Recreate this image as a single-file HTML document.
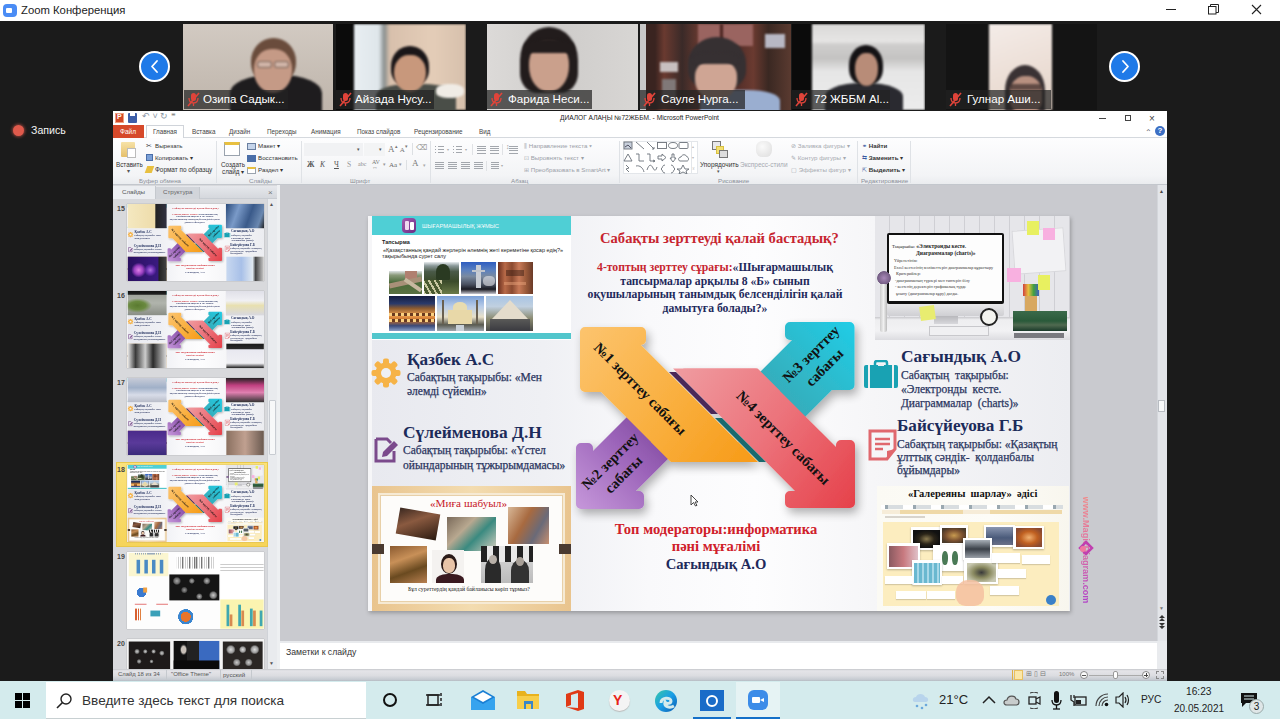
<!DOCTYPE html>
<html><head><meta charset="utf-8">
<style>
*{margin:0;padding:0;box-sizing:border-box}
html,body{width:1280px;height:719px;overflow:hidden;background:#1b1b1b;font-family:"Liberation Sans",sans-serif}
.a{position:absolute}
.t{position:absolute;white-space:nowrap}
/* title bar */
#tb{left:0;top:0;width:1280px;height:21px;background:#fff}
/* thumbs */
.th{position:absolute;top:24px;height:86px;background:#0d0d0d;overflow:hidden}
.lbl{position:absolute;height:19px;background:rgba(34,34,34,.72)}
.mic{position:absolute;left:4px;top:3px;width:13px;height:13px}
.circ{position:absolute;width:31px;height:31px;border-radius:50%;background:#1f7ae8;border:2.5px solid #fff}
.th>div{filter:blur(1.2px)}
/* ppt */
#ppt{left:113px;top:111px;width:1054px;height:570px;background:#c9cacf;overflow:hidden}
/* taskbar */
#task{left:0;top:681px;width:1280px;height:38px;background:#d4ebed}
</style></head><body>

<!-- Title bar -->
<div id="tb" class="a">
  <div class="a" style="left:3px;top:4px;width:14px;height:13px;border-radius:4px;background:#4a8cf5"></div>
  <div class="a" style="left:6px;top:8px;width:6px;height:5px;border-radius:1px;background:#fff"></div>
  <div class="t" style="left:21px;top:4px;font-size:11.3px;color:#222">Zoom Конференция</div>
  <div class="a" style="left:1166px;top:9px;width:10px;height:1px;background:#222"></div>
  <svg class="a" style="left:1208px;top:4px" width="11" height="11" viewBox="0 0 11 11"><rect x="0.5" y="2.5" width="7.5" height="7.5" fill="#fff" stroke="#222" stroke-width="1"/><path d="M2.5 2.5 V0.5 H10.5 V8.5 H8" fill="none" stroke="#222" stroke-width="1"/></svg>
  <svg class="a" style="left:1251px;top:4px" width="11" height="11" viewBox="0 0 11 11"><path d="M1 1 L10 10 M10 1 L1 10" stroke="#222" stroke-width="1.1"/></svg>
</div>

<!-- thumbnails -->
<div class="th" style="left:183px;width:150px;background:linear-gradient(#d2cac2,#c6bdb4 60%,#bfb5ab)">
 <div class="a" style="left:47px;top:51px;width:92px;height:40px;border-radius:45% 45% 0 0;background:#1e1c1e"></div>
 <div class="a" style="left:68px;top:14px;width:45px;height:46px;border-radius:50% 50% 45% 45%;background:#6a4c3c"></div>
 <div class="a" style="left:71px;top:25px;width:38px;height:44px;border-radius:45% 45% 50% 50%;background:#c59a86"></div>
 <div class="a" style="left:74px;top:37px;width:15px;height:7px;border-radius:3px;border:1px solid rgba(90,70,60,.7);background:rgba(230,230,230,.35)"></div><div class="a" style="left:91px;top:37px;width:15px;height:7px;border-radius:3px;border:1px solid rgba(90,70,60,.7);background:rgba(230,230,230,.35)"></div>
</div>
<div class="th" style="left:336px;width:130px;background:#0b0b0b">
 <div class="a" style="left:18px;top:0;width:112px;height:86px;background:linear-gradient(90deg,#e8eef2 0%,#dfe6ea 22%,#8a9090 27%,#d8c0ac 32%,#e4cdb8 70%,#d6c0ac 100%)"></div>
 <div class="a" style="left:40px;top:60px;width:80px;height:30px;border-radius:40% 40% 0 0;background:#4a4e48"></div>
 <div class="a" style="left:55px;top:22px;width:38px;height:40px;border-radius:50% 50% 40% 40%;background:#1a1618"></div>
 <div class="a" style="left:58px;top:31px;width:32px;height:37px;border-radius:45% 45% 50% 50%;background:#c8987c"></div>
 <div class="a" style="left:100px;top:60px;width:28px;height:14px;border-radius:40%;background:#f0ece6"></div>
</div>
<div class="th" style="left:487px;width:151px;background:linear-gradient(90deg,#dcdad8,#cfcdcb 50%,#d8d6d4)">
 <div class="a" style="left:33px;top:3px;width:58px;height:66px;border-radius:50% 50% 30% 30%;background:#221c1c"></div>
 <div class="a" style="left:42px;top:17px;width:40px;height:51px;border-radius:45% 45% 50% 50%;background:#caa08c"></div>
 <div class="a" style="left:37px;top:15px;width:50px;height:14px;border-radius:50% 50% 10% 10%;background:#221c1c"></div>
 <div class="a" style="left:45px;top:72px;width:50px;height:16px;background:#d8d2cf"></div>
</div>
<div class="th" style="left:640px;width:151px;background:linear-gradient(90deg,#c8c8c8 0 6px,#3a2420 6px 10%,#6a3a30 16%,#3a2a28 28%,#6a3a30 40%,#5a3430 48%,#4a2a26 60%,#6a3a30 75%,#3a2822 85%,#5a3a30 100%)">
 <div class="a" style="left:58px;top:0;width:55px;height:22px;background:#9a6460"></div>
 <div class="a" style="left:80px;top:0;width:3px;height:24px;background:#4a2420"></div>
 <div class="a" style="left:125px;top:10px;width:20px;height:14px;background:#b8b8c4"></div>
 <div class="a" style="left:20px;top:38px;width:18px;height:10px;background:#c8c0c0"></div>
 <div class="a" style="left:22px;top:55px;width:14px;height:20px;background:#807878"></div>
 <div class="a" style="left:60px;top:66px;width:80px;height:26px;border-radius:40% 40% 0 0;background:#9aaed0"></div>
 <div class="a" style="left:48px;top:13px;width:58px;height:52px;border-radius:50% 50% 35% 35%;background:#363032"></div>
 <div class="a" style="left:55px;top:36px;width:42px;height:40px;border-radius:40% 40% 50% 50%;background:#cfa594"></div>
 <div class="a" style="left:52px;top:28px;width:48px;height:12px;border-radius:50% 50% 20% 20%;background:#363032"></div>
</div>
<div class="th" style="left:792px;width:133px;background:#0b0b0b">
 <div class="a" style="left:20px;top:0;width:113px;height:86px;background:linear-gradient(#dad9d8 0%,#e6e5e4 20%,#cfcecd 24%,#c4c3c2 40%,#e6e6e6 55%,#ececec 100%)"></div>
 <div class="a" style="left:33px;top:59px;width:78px;height:30px;border-radius:45% 45% 0 0;background:#2a2a30"></div>
 <div class="a" style="left:57px;top:21px;width:34px;height:40px;border-radius:50% 50% 40% 40%;background:#141214"></div>
 <div class="a" style="left:63px;top:29px;width:23px;height:33px;border-radius:45% 45% 50% 50%;background:#b88c78"></div>
</div>
<div class="th" style="left:946px;width:151px;background:#141414">
 <div class="a" style="left:43px;top:0;width:63px;height:86px;background:linear-gradient(160deg,#f4ece8 0%,#ede0d8 50%,#e4d4c8 100%)"></div>
 <div class="a" style="left:59px;top:41px;width:40px;height:50px;border-radius:50% 50% 0 0;background:#3a3234"></div>
 <div class="a" style="left:64px;top:52px;width:32px;height:36px;border-radius:45% 45% 30% 30%;background:#b89080"></div>
 <div class="a" style="left:64px;top:60px;width:32px;height:6px;background:rgba(40,30,30,.6)"></div>
</div>
<!-- labels -->
<div class="lbl" style="left:184px;top:90px;width:104px"></div>
<div class="lbl" style="left:336px;top:90px;width:98px"></div>
<div class="lbl" style="left:487px;top:90px;width:105px"></div>
<div class="lbl" style="left:640px;top:90px;width:105px"></div>
<div class="lbl" style="left:792px;top:90px;width:98px"></div>
<div class="lbl" style="left:946px;top:90px;width:105px"></div>
<div class="t" style="left:203px;top:92px;font-size:11.6px;color:#fff">Озипа Садык...</div>
<div class="t" style="left:355px;top:92px;font-size:11.6px;color:#fff">Айзада Нусу...</div>
<div class="t" style="left:508px;top:92px;font-size:11.6px;color:#fff">Фарида Неси...</div>
<div class="t" style="left:661px;top:92px;font-size:11.6px;color:#fff">Сауле Нурга...</div>
<div class="t" style="left:814px;top:92px;font-size:11.6px;color:#fff">72 ЖББМ Al...</div>
<div class="t" style="left:967px;top:92px;font-size:11.6px;color:#fff">Гулнар Аши...</div>
<svg class="a" style="left:187px;top:92px" width="13" height="15" viewBox="0 0 13 15"><rect x="4" y="1" width="5" height="8" rx="2.5" fill="#e0443a"/><path d="M2 6 Q2 11 6.5 11 Q11 11 11 6 M6.5 11 V14" fill="none" stroke="#e0443a" stroke-width="1.3"/><line x1="1" y1="14" x2="12" y2="1" stroke="#e0443a" stroke-width="1.6"/></svg>
<svg class="a" style="left:339px;top:92px" width="13" height="15" viewBox="0 0 13 15"><rect x="4" y="1" width="5" height="8" rx="2.5" fill="#e0443a"/><path d="M2 6 Q2 11 6.5 11 Q11 11 11 6 M6.5 11 V14" fill="none" stroke="#e0443a" stroke-width="1.3"/><line x1="1" y1="14" x2="12" y2="1" stroke="#e0443a" stroke-width="1.6"/></svg>
<svg class="a" style="left:490px;top:92px" width="13" height="15" viewBox="0 0 13 15"><rect x="4" y="1" width="5" height="8" rx="2.5" fill="#e0443a"/><path d="M2 6 Q2 11 6.5 11 Q11 11 11 6 M6.5 11 V14" fill="none" stroke="#e0443a" stroke-width="1.3"/><line x1="1" y1="14" x2="12" y2="1" stroke="#e0443a" stroke-width="1.6"/></svg>
<svg class="a" style="left:643px;top:92px" width="13" height="15" viewBox="0 0 13 15"><rect x="4" y="1" width="5" height="8" rx="2.5" fill="#e0443a"/><path d="M2 6 Q2 11 6.5 11 Q11 11 11 6 M6.5 11 V14" fill="none" stroke="#e0443a" stroke-width="1.3"/><line x1="1" y1="14" x2="12" y2="1" stroke="#e0443a" stroke-width="1.6"/></svg>
<svg class="a" style="left:795px;top:92px" width="13" height="15" viewBox="0 0 13 15"><rect x="4" y="1" width="5" height="8" rx="2.5" fill="#e0443a"/><path d="M2 6 Q2 11 6.5 11 Q11 11 11 6 M6.5 11 V14" fill="none" stroke="#e0443a" stroke-width="1.3"/><line x1="1" y1="14" x2="12" y2="1" stroke="#e0443a" stroke-width="1.6"/></svg>
<svg class="a" style="left:949px;top:92px" width="13" height="15" viewBox="0 0 13 15"><rect x="4" y="1" width="5" height="8" rx="2.5" fill="#e0443a"/><path d="M2 6 Q2 11 6.5 11 Q11 11 11 6 M6.5 11 V14" fill="none" stroke="#e0443a" stroke-width="1.3"/><line x1="1" y1="14" x2="12" y2="1" stroke="#e0443a" stroke-width="1.6"/></svg>
<div class="circ" style="left:139px;top:51px"></div>
<div class="circ" style="left:1109px;top:51px"></div>
<svg class="a" style="left:148px;top:59px" width="14" height="15" viewBox="0 0 14 15"><path d="M9 2 L4 7.5 L9 13" fill="none" stroke="#fff" stroke-width="1.8" stroke-linecap="round" stroke-linejoin="round"/></svg>
<svg class="a" style="left:1118px;top:59px" width="14" height="15" viewBox="0 0 14 15"><path d="M5 2 L10 7.5 L5 13" fill="none" stroke="#fff" stroke-width="1.8" stroke-linecap="round" stroke-linejoin="round"/></svg>

<!-- Запись -->
<div class="a" style="left:13px;top:125px;width:11px;height:11px;border-radius:50%;background:#e05a4c;box-shadow:0 0 3px 1px rgba(224,90,76,.6)"></div>
<div class="t" style="left:31px;top:124px;font-size:10.6px;color:#f4f4f4">Запись</div>

<!-- PowerPoint -->

<div id="ppt" class="a">
</div>
<!-- QAT / title -->
<div class="a" style="left:113px;top:111px;width:1054px;height:14px;background:#fff"></div>
<div class="a" style="left:115px;top:113px;width:9px;height:10px;background:#d24726;border:1px solid #f0a080"></div>
<div class="t" style="left:117px;top:113px;font-size:7px;color:#fff;font-weight:bold">P</div>
<div class="a" style="left:128px;top:113px;width:9px;height:10px;background:#3d5ea8;border-radius:1px"></div>
<div class="a" style="left:130px;top:113px;width:5px;height:3px;background:#fff"></div>
<div class="t" style="left:142px;top:111px;font-size:9px;color:#8a95a5">↶ ˅ ↻ <span style="color:#333">⁼</span></div>
<div class="t" style="left:560px;top:114px;font-size:6.6px;color:#1a1a1a">ДИАЛОГ АЛАҢЫ №72ЖББМ. - Microsoft PowerPoint</div>
<div class="a" style="left:1099px;top:118px;width:7px;height:1px;background:#444"></div>
<div class="a" style="left:1125px;top:115px;width:6px;height:6px;border:1px solid #444"></div>
<div class="t" style="left:1149px;top:113px;font-size:10px;color:#444">×</div>
<!-- tabs row -->
<div class="a" style="left:113px;top:125px;width:1054px;height:13px;background:#fff"></div>
<div class="a" style="left:113px;top:137px;width:1054px;height:1px;background:#d5d9de"></div>
<div class="a" style="left:113px;top:125px;width:31px;height:13px;background:#d6492a"></div>
<div class="t" style="left:120px;top:128px;font-size:6.5px;color:#fff">Файл</div>
<div class="a" style="left:146px;top:125px;width:38px;height:14px;background:#fff;border:1px solid #d0d4da;border-bottom:none"></div>
<div class="t" style="left:153px;top:128px;font-size:6.3px;color:#444">Главная</div>
<div class="t" style="left:192px;top:128px;font-size:6.3px;color:#444">Вставка</div>
<div class="t" style="left:229px;top:128px;font-size:6.3px;color:#444">Дизайн</div>
<div class="t" style="left:267px;top:128px;font-size:6.3px;color:#444">Переходы</div>
<div class="t" style="left:311px;top:128px;font-size:6.3px;color:#444">Анимация</div>
<div class="t" style="left:357px;top:128px;font-size:6.3px;color:#444">Показ слайдов</div>
<div class="t" style="left:414px;top:128px;font-size:6.3px;color:#444">Рецензирование</div>
<div class="t" style="left:479px;top:128px;font-size:6.3px;color:#444">Вид</div>
<div class="t" style="left:1145px;top:128px;font-size:8px;color:#666">⌃</div>
<div class="a" style="left:1155px;top:126px;width:10px;height:10px;border-radius:50%;background:#3c6fc4;color:#fff;font-size:8px;line-height:10px;text-align:center;font-weight:bold">?</div>
<!-- ribbon -->
<div class="a" style="left:113px;top:138px;width:1054px;height:47px;background:linear-gradient(#fdfdfe,#f3f4f6 80%,#e9ebee)"></div>
<div class="a" style="left:113px;top:184px;width:1054px;height:1px;background:#c3c7cd"></div>
<div class="a" style="left:216px;top:141px;width:1px;height:42px;background:#dfe2e6"></div>
<div class="a" style="left:301px;top:141px;width:1px;height:42px;background:#dfe2e6"></div>
<div class="a" style="left:430px;top:141px;width:1px;height:42px;background:#dfe2e6"></div>
<div class="a" style="left:619px;top:141px;width:1px;height:42px;background:#dfe2e6"></div>
<div class="a" style="left:857px;top:141px;width:1px;height:42px;background:#dfe2e6"></div>
<div class="a" style="left:910px;top:141px;width:1px;height:42px;background:#dfe2e6"></div>
<div class="t" style="left:139px;top:177px;font-size:6.2px;color:#8a8f98">Буфер обмена</div>
<div class="t" style="left:249px;top:177px;font-size:6.2px;color:#8a8f98">Слайды</div>
<div class="t" style="left:350px;top:177px;font-size:6.2px;color:#8a8f98">Шрифт</div>
<div class="t" style="left:511px;top:177px;font-size:6.2px;color:#8a8f98">Абзац</div>
<div class="t" style="left:718px;top:177px;font-size:6.2px;color:#8a8f98">Рисование</div>
<div class="t" style="left:861px;top:177px;font-size:6.2px;color:#8a8f98">Редактирование</div>
<!-- clipboard -->
<div class="a" style="left:121px;top:142px;width:14px;height:15px;background:linear-gradient(#f6e2a8,#e6c06a);border-radius:1px"></div>
<div class="a" style="left:127px;top:148px;width:9px;height:10px;background:#fff;border:1px solid #bbb"></div>
<div class="t" style="left:116px;top:161px;font-size:6.3px;color:#333">Вставить</div>
<div class="t" style="left:127px;top:167px;font-size:6px;color:#555">▾</div>
<div class="t" style="left:146px;top:142px;font-size:7px;color:#444">✂</div>
<div class="t" style="left:155px;top:142px;font-size:6.2px;color:#333">Вырезать</div>
<div class="a" style="left:146px;top:154px;width:7px;height:7px;background:#7aa0d8;border:1px solid #4a6ea8"></div>
<div class="t" style="left:155px;top:154px;font-size:6.2px;color:#333">Копировать ▾</div>
<div class="a" style="left:146px;top:166px;width:7px;height:7px;background:#e8c040;transform:skew(-20deg)"></div>
<div class="t" style="left:155px;top:166px;font-size:6.4px;color:#333">Формат по образцу</div>
<!-- slides -->
<div class="a" style="left:224px;top:142px;width:16px;height:14px;background:#fff;border:1px solid #9aa3ae;border-top:3px solid #e8c040"></div>
<div class="t" style="left:221px;top:161px;font-size:6.3px;color:#333">Создать</div>
<div class="t" style="left:222px;top:168px;font-size:6.3px;color:#333">слайд ▾</div>
<div class="a" style="left:247px;top:143px;width:9px;height:7px;background:#c5d4ea;border:1px solid #6a7fa0"></div>
<div class="t" style="left:258px;top:142px;font-size:6.2px;color:#333">Макет ▾</div>
<div class="a" style="left:247px;top:155px;width:9px;height:7px;background:#4a6ea8"></div>
<div class="t" style="left:258px;top:154px;font-size:6.2px;color:#333">Восстановить</div>
<div class="a" style="left:247px;top:167px;width:9px;height:7px;background:#fff;border:1px solid #9aa3ae;border-top:2px solid #e8c040"></div>
<div class="t" style="left:258px;top:166px;font-size:6.2px;color:#333">Раздел ▾</div>
<!-- font -->
<div class="a" style="left:304px;top:143px;width:59px;height:13px;background:#f1f2f4"></div>
<div class="t" style="left:357px;top:146px;font-size:5px;color:#555">▾</div>
<div class="a" style="left:364px;top:143px;width:21px;height:13px;background:#f3f4f5"></div>
<div class="t" style="left:379px;top:146px;font-size:5px;color:#555">▾</div>
<div class="t" style="left:388px;top:143px;font-size:9px;color:#777;font-family:'Liberation Serif',serif">A<span style="font-size:5px;vertical-align:4px">▴</span> <span style="font-size:7px">A</span><span style="font-size:5px;vertical-align:4px">▾</span></div>
<div class="a" style="left:412px;top:143px;width:1px;height:12px;background:#dde0e3"></div>
<div class="t" style="left:416px;top:143px;font-size:8px;color:#999">⌫</div>
<div class="t" style="left:307px;top:160px;font-size:7.5px;color:#555;font-family:'Liberation Serif',serif;font-weight:bold">Ж</div>
<div class="t" style="left:320px;top:160px;font-size:7.5px;color:#555;font-family:'Liberation Serif',serif;font-style:italic">К</div>
<div class="t" style="left:334px;top:160px;font-size:7.5px;color:#555;font-family:'Liberation Serif',serif;text-decoration:underline">Ч</div>
<div class="t" style="left:347px;top:160px;font-size:7.5px;color:#999;font-family:'Liberation Serif',serif">S</div>
<div class="t" style="left:358px;top:161px;font-size:6px;color:#888;font-family:'Liberation Serif',serif">abc</div>
<div class="t" style="left:372px;top:160px;font-size:6px;color:#777;font-family:'Liberation Serif',serif;line-height:5px">AV<br>↔</div>
<div class="t" style="left:383px;top:161px;font-size:5px;color:#999">▾</div>
<div class="t" style="left:389px;top:161px;font-size:7px;color:#666;font-family:'Liberation Serif',serif">Aa</div>
<div class="t" style="left:399px;top:161px;font-size:5px;color:#999">▾</div>
<div class="a" style="left:406px;top:160px;width:1px;height:10px;background:#dde0e3"></div>
<div class="t" style="left:412px;top:158px;font-size:9px;color:#777;font-family:'Liberation Serif',serif">A</div>
<div class="t" style="left:423px;top:162px;font-size:5px;color:#aaa">▾</div>
<!-- paragraph -->
<div class="a" style="left:435px;top:146.0px;width:1.2px;height:1.2px;background:#a3a7ad"></div><div class="a" style="left:438px;top:146.0px;width:6px;height:1px;background:#a3a7ad"></div><div class="a" style="left:435px;top:149.0px;width:1.2px;height:1.2px;background:#a3a7ad"></div><div class="a" style="left:438px;top:149.0px;width:6px;height:1px;background:#a3a7ad"></div><div class="a" style="left:435px;top:152.0px;width:1.2px;height:1.2px;background:#a3a7ad"></div><div class="a" style="left:438px;top:152.0px;width:6px;height:1px;background:#a3a7ad"></div><div class="t" style="left:447px;top:147px;font-size:4px;color:#aaa">▾</div><div class="a" style="left:453px;top:146.0px;width:1.2px;height:1.2px;background:#a3a7ad"></div><div class="a" style="left:456px;top:146.0px;width:6px;height:1px;background:#a3a7ad"></div><div class="a" style="left:453px;top:149.0px;width:1.2px;height:1.2px;background:#a3a7ad"></div><div class="a" style="left:456px;top:149.0px;width:6px;height:1px;background:#a3a7ad"></div><div class="a" style="left:453px;top:152.0px;width:1.2px;height:1.2px;background:#a3a7ad"></div><div class="a" style="left:456px;top:152.0px;width:6px;height:1px;background:#a3a7ad"></div><div class="t" style="left:465px;top:147px;font-size:4px;color:#aaa">▾</div><div class="a" style="left:472px;top:144px;width:1px;height:11px;background:#e0e2e5"></div><div class="a" style="left:477px;top:146.0px;width:9px;height:1px;background:#a3a7ad"></div><div class="a" style="left:477px;top:148.2px;width:9px;height:1px;background:#a3a7ad"></div><div class="a" style="left:477px;top:150.4px;width:9px;height:1px;background:#a3a7ad"></div><div class="a" style="left:477px;top:152.6px;width:9px;height:1px;background:#a3a7ad"></div><div class="a" style="left:490px;top:146.0px;width:9px;height:1px;background:#a3a7ad"></div><div class="a" style="left:490px;top:148.2px;width:9px;height:1px;background:#a3a7ad"></div><div class="a" style="left:490px;top:150.4px;width:9px;height:1px;background:#a3a7ad"></div><div class="a" style="left:490px;top:152.6px;width:9px;height:1px;background:#a3a7ad"></div><div class="a" style="left:502px;top:144px;width:1px;height:11px;background:#e0e2e5"></div><div class="a" style="left:509px;top:146.0px;width:9px;height:1px;background:#a3a7ad"></div><div class="a" style="left:509px;top:148.2px;width:9px;height:1px;background:#a3a7ad"></div><div class="a" style="left:509px;top:150.4px;width:9px;height:1px;background:#a3a7ad"></div><div class="a" style="left:509px;top:152.6px;width:9px;height:1px;background:#a3a7ad"></div><div class="t" style="left:506px;top:143px;font-size:7px;color:#999">↕</div><div class="a" style="left:435px;top:162.0px;width:9px;height:1px;background:#a3a7ad"></div><div class="a" style="left:435px;top:164.0px;width:9px;height:1px;background:#a3a7ad"></div><div class="a" style="left:435px;top:166.0px;width:9px;height:1px;background:#a3a7ad"></div><div class="a" style="left:435px;top:168.0px;width:9px;height:1px;background:#a3a7ad"></div><div class="a" style="left:448px;top:162.0px;width:9px;height:1px;background:#a3a7ad"></div><div class="a" style="left:448px;top:164.0px;width:9px;height:1px;background:#a3a7ad"></div><div class="a" style="left:448px;top:166.0px;width:9px;height:1px;background:#a3a7ad"></div><div class="a" style="left:448px;top:168.0px;width:9px;height:1px;background:#a3a7ad"></div><div class="a" style="left:461px;top:162.0px;width:9px;height:1px;background:#a3a7ad"></div><div class="a" style="left:461px;top:164.0px;width:9px;height:1px;background:#a3a7ad"></div><div class="a" style="left:461px;top:166.0px;width:9px;height:1px;background:#a3a7ad"></div><div class="a" style="left:461px;top:168.0px;width:9px;height:1px;background:#a3a7ad"></div><div class="a" style="left:474px;top:162.0px;width:9px;height:1px;background:#a3a7ad"></div><div class="a" style="left:474px;top:164.0px;width:9px;height:1px;background:#a3a7ad"></div><div class="a" style="left:474px;top:166.0px;width:9px;height:1px;background:#a3a7ad"></div><div class="a" style="left:474px;top:168.0px;width:9px;height:1px;background:#a3a7ad"></div><div class="a" style="left:486px;top:161px;width:1px;height:10px;background:#e0e2e5"></div><div class="a" style="left:491px;top:162.0px;width:8px;height:1px;background:#a3a7ad"></div><div class="a" style="left:491px;top:164.0px;width:8px;height:1px;background:#a3a7ad"></div><div class="a" style="left:491px;top:166.0px;width:8px;height:1px;background:#a3a7ad"></div><div class="a" style="left:491px;top:168.0px;width:8px;height:1px;background:#a3a7ad"></div><div class="t" style="left:501px;top:163px;font-size:4px;color:#aaa">▾</div>
<div class="t" style="left:524px;top:142px;font-size:6.2px;color:#9aa0a8"><span style="color:#a8acb2">⫼</span> Направление текста ▾</div>
<div class="t" style="left:524px;top:154px;font-size:6.2px;color:#9aa0a8"><span style="color:#a8acb2">⊡</span> Выровнять текст ▾</div>
<div class="t" style="left:524px;top:166px;font-size:6.2px;color:#9aa0a8"><span style="color:#a8acb2">⊞</span> Преобразовать в SmartArt ▾</div>
<!-- drawing -->
<div class="a" style="left:623px;top:141px;width:75px;height:33px;background:#fff;border:1px solid #e3e6ea"></div>
<svg class="a" style="left:622px;top:140px" width="76" height="34" viewBox="0 0 76 34" fill="none" stroke="#6a7078" stroke-width=".9">
<rect x="2" y="2" width="8" height="7" fill="#c8d0dc"/><path d="M3 7 L6 5 L9 8" stroke="#445"/>
<path d="M14 2 L22 9"/><path d="M25 2 L32 9 M30 9 L32 9 L32 7"/>
<rect x="35.5" y="2.5" width="9" height="6"/><ellipse cx="51" cy="5.5" rx="4.5" ry="3"/><rect x="57" y="2.5" width="9" height="6" rx="1"/>
<path d="M6 14 L2 21 L10 21 Z"/><path d="M14 14 L17 14 L17 21 L22 21"/><path d="M25 14 L28 14 L28 21 L33 21 M31 20 L33 21 L31 22"/>
<path d="M36 16 L40 16 L40 14 L44 17.5 L40 21 L40 19 L36 19 Z"/><path d="M50 14 L52 14 L52 18 L54 18 L51 22 L48 18 L50 18 Z"/><path d="M58 21 C56 21 56 17 59 17 C60 14 64 14 65 17 C67 17 67 21 65 21 Z"/>
<path d="M4 25 L7 28 L4 29 L7 32"/><path d="M14 26 C18 25 21 28 22 32"/><path d="M25 30 C27 24 29 24 31 28 C33 32 34 30 35 27"/>
<path d="M43 25 C40 25 41 28 39 29 C41 30 40 33 43 33"/><path d="M49 25 C52 25 51 28 53 29 C51 30 52 33 49 33"/><path d="M61 25 L63 29 L67 29 L64 31 L65 34 L61 32 L57 34 L58 31 L55 29 L59 29 Z"/>
</svg>
<div class="a" style="left:691px;top:141px;width:1px;height:32px;background:#e3e6ea"></div>
<div class="t" style="left:692px;top:141px;font-size:4px;color:#bbb;line-height:11px">▴<br>▾<br>⊻</div>
<div class="a" style="left:712px;top:141px;width:9px;height:9px;background:#e8e8ea;border:1px solid #777"></div>
<div class="a" style="left:716px;top:146px;width:8px;height:8px;background:#f4e070;border:1px solid #d8c040"></div>
<div class="a" style="left:719px;top:150px;width:9px;height:8px;background:#ddd;border:1px solid #777"></div>
<div class="t" style="left:700px;top:161px;font-size:6.5px;color:#333">Упорядочить</div>
<div class="t" style="left:717px;top:168px;font-size:5px;color:#555">▾</div>
<div class="a" style="left:756px;top:141px;width:16px;height:16px;background:radial-gradient(circle at 40% 35%,#fafafa,#ddd);border-radius:40%"></div>
<div class="t" style="left:740px;top:161px;font-size:6.5px;color:#a5a9b0">Экспресс-стили</div>
<div class="t" style="left:791px;top:142px;font-size:6.2px;color:#a5a9b0">⊘ Заливка фигуры ▾</div>
<div class="t" style="left:791px;top:154px;font-size:6.2px;color:#a5a9b0">✎ Контур фигуры ▾</div>
<div class="t" style="left:791px;top:166px;font-size:6.2px;color:#a5a9b0">▢ Эффекты фигур ▾</div>
<!-- editing -->
<div class="t" style="left:862px;top:142px;font-size:6.2px;color:#333"><span style="color:#3a5aa0">⚭</span> <b>Найти</b></div>
<div class="t" style="left:862px;top:154px;font-size:6.2px;color:#333"><span style="color:#3a5aa0">⇆</span> <b>Заменить</b> ▾</div>
<div class="t" style="left:862px;top:166px;font-size:6.2px;color:#333"><span style="color:#3a5aa0">⇱</span> <b>Выделить</b> ▾</div>



<!-- left panel -->
<div class="a" style="left:113px;top:185px;width:165px;height:484px;background:#d8d9dc"></div>
<div class="a" style="left:113px;top:186px;width:165px;height:13px;background:linear-gradient(#e6e8ec,#d5d8dd);border-bottom:1px solid #c8ccd2"></div>
<div class="a" style="left:113px;top:186px;width:43px;height:13px;background:#eceef1;border-right:1px solid #c5c9ce"></div>
<div class="a" style="left:156px;top:187px;width:44px;height:12px;background:#d2d5da;border-right:1px solid #c5c9ce"></div>
<div class="t" style="left:122px;top:188px;font-size:6.2px;color:#555">Слайды</div>
<div class="t" style="left:163px;top:188px;font-size:6.2px;color:#666">Структура</div>
<div class="t" style="left:268px;top:188px;font-size:8px;color:#777">×</div>
<div class="a" style="left:267px;top:199px;width:10px;height:470px;background:#e9ebee;border-left:1px solid #d0d3d8"></div>
<div class="t" style="left:269px;top:201px;font-size:5px;color:#555">▲</div>
<div class="t" style="left:269px;top:660px;font-size:5px;color:#555">▼</div>
<div class="a" style="left:269px;top:400px;width:7px;height:55px;background:#f7f8f9;border:1px solid #c8ccd2;border-radius:1px"></div>
<div class="a" style="left:277px;top:185px;width:3px;height:484px;background:#eef0f2"></div>
<!-- selected highlight -->
<div class="a" style="left:116px;top:462px;width:152px;height:85px;background:linear-gradient(#fbe27a,#f6d45a);border:1px solid #e9c84a"></div>
<div class="t" style="left:117px;top:205px;font-size:7px;font-weight:bold;color:#444">15</div>
<div class="t" style="left:117px;top:292px;font-size:7px;font-weight:bold;color:#444">16</div>
<div class="t" style="left:117px;top:379px;font-size:7px;font-weight:bold;color:#444">17</div>
<div class="t" style="left:117px;top:466px;font-size:7px;font-weight:bold;color:#444">18</div>
<div class="t" style="left:117px;top:553px;font-size:7px;font-weight:bold;color:#444">19</div>
<div class="t" style="left:117px;top:640px;font-size:7px;font-weight:bold;color:#444">20</div>
<!-- thumbs placeholders -->
<div class="a" style="left:113px;top:199px;width:154px;height:470px;overflow:hidden"><div class="a" style="left:-113px;top:-199px;width:400px;height:900px"><div class="a" style="left:127px;top:204px;width:137px;height:77px;overflow:hidden;box-shadow:0 0 1px rgba(0,0,0,.35)"><div class="a" style="left:0;top:0;width:702px;height:395px;transform:scale(0.19516);transform-origin:0 0;background:linear-gradient(90deg,#e8e9ef 0%,#eff0f4 25%,#f9f9fb 40%,#fdfdfe 55%,#f6f6f8 72%,#ecedf1 100%)">
 <div class="a" style="left:0;top:0;width:4px;height:395px;background:#f6f6f8"></div>
 <!-- left task panel -->
 <div class="a" style="left:4px;top:0;width:199px;height:124px;background:#fff"></div>
 <div class="a" style="left:4px;top:0;width:199px;height:19px;background:#4fcfd5"></div>
 <div class="a" style="left:34px;top:2px;width:14px;height:15px;border-radius:4px;background:linear-gradient(135deg,#a45cb0,#6a2c84)"></div>
 <div class="a" style="left:37px;top:5px;width:4px;height:9px;background:#f0d8f0;border-radius:1px"></div>
 <div class="a" style="left:42px;top:6px;width:4px;height:8px;background:#fff;border-radius:1px"></div>
 <div class="t" style="left:54px;top:7px;font-size:5.8px;color:#f4fbfb">ШЫҒАРМАШЫЛЫҚ ЖҰМЫС</div>
 <div class="t" style="left:14px;top:23px;font-size:5.5px;color:#222;font-weight:bold">Тапсырма</div>
 <div class="t" style="left:15px;top:31px;font-size:5.5px;color:#222">«Қазақстанның қандай жерлерін әлемнің жеті кереметіне қосар едің?»</div>
 <div class="t" style="left:14px;top:37px;font-size:5.5px;color:#222">тақырыбында  сурет салу</div>
 <div class="a" style="left:21.2px;top:55.3px;width:33.3px;height:22.4px;background:linear-gradient(#dfe4e6 0%,#8a9a7a 18%,#4a6a3a 50%,#5a7040 100%);overflow:hidden"><div class="a" style="left:16px;top:0px;width:12px;height:8px;background:#b08070;"></div><div class="a" style="left:0px;top:9px;width:33px;height:5px;background:#a89078;transform:rotate(-12deg)"></div><div class="a" style="left:14px;top:12px;width:20px;height:4px;background:#c8b8a0;transform:rotate(35deg)"></div></div>
 <div class="a" style="left:55.7px;top:45.6px;width:35px;height:32px;background:linear-gradient(#e8ecef 0%,#8a9898 12%,#4a5a48 30%,#3a4a2a 60%,#6a7a48 100%);overflow:hidden"><div class="a" style="left:12px;top:2px;width:14px;height:16px;background:#2a3a22;border-radius:50% 50% 10% 10%"></div><div class="a" style="left:0px;top:18px;width:18px;height:14px;background:repeating-linear-gradient(60deg,#c8c8a0 0 2px,#4a5a30 2px 5px);"></div></div>
 <div class="a" style="left:93.3px;top:45.6px;width:34.5px;height:32px;background:linear-gradient(#2e5cc0 0%,#5a80c0 25%,#7a8aa0 45%,#4a5060 70%,#1a1a22 85%,#c8c8d0 100%);overflow:hidden"><div class="a" style="left:15px;top:3px;width:5px;height:23px;background:#c8ccd4;"></div><div class="a" style="left:11px;top:8px;width:13px;height:2px;background:#c0c4cc;"></div><div class="a" style="left:22px;top:14px;width:12px;height:10px;background:rgba(230,230,235,.6);border-radius:40%"></div></div>
 <div class="a" style="left:130.2px;top:45.6px;width:34.5px;height:32px;background:linear-gradient(90deg,#6a3020 0%,#b86a48 20%,#8a4a30 40%,#c87a58 60%,#9a5a3a 80%,#6a3a28 100%);overflow:hidden"><div class="a" style="left:8px;top:8px;width:18px;height:6px;background:rgba(60,30,20,.5);"></div><div class="a" style="left:6px;top:20px;width:22px;height:3px;background:rgba(230,160,120,.5);"></div></div>
 <div class="a" style="left:21.2px;top:80.1px;width:46px;height:35.1px;background:linear-gradient(#141c40 0%,#2a3a6a 22%,#8a5a30 35%,#f0a050 55%,#c06a28 70%,#3a4a7a 85%,#8aa0c8 100%);overflow:hidden"><div class="a" style="left:0px;top:17px;width:46px;height:3px;background:repeating-linear-gradient(90deg,#fbd080 0 3px,#6a3a20 3px 6px);"></div><div class="a" style="left:0px;top:23px;width:46px;height:3px;background:repeating-linear-gradient(90deg,#fbd080 0 3px,#6a3a20 3px 6px);"></div></div>
 <div class="a" style="left:69px;top:80.1px;width:46.7px;height:35.1px;background:linear-gradient(#7aa0d8 0%,#b8cce8 30%,#e8e0c8 60%,#5a5a50 82%,#a0a8b0 100%);overflow:hidden"><div class="a" style="left:16px;top:6px;width:14px;height:10px;background:#e8dcb0;border-radius:50% 50% 0 0"></div><div class="a" style="left:11px;top:14px;width:24px;height:14px;background:#e8d8a8;"></div><div class="a" style="left:5px;top:4px;width:2px;height:24px;background:#6a6050;"></div><div class="a" style="left:39px;top:4px;width:2px;height:24px;background:#6a6050;"></div><div class="a" style="left:19px;top:29px;width:8px;height:6px;background:#c8d0d8;"></div></div>
 <div class="a" style="left:117.5px;top:80.1px;width:47.2px;height:35.1px;background:linear-gradient(#a8c4e4 0%,#c0d0e0 30%,#8a8a70 65%,#4a4a48 100%);overflow:hidden"><div class="a" style="left:6px;top:4px;width:0;height:0;border-left:18px solid transparent;border-right:18px solid transparent;border-bottom:19px solid #e4dccc"></div><div class="a" style="left:4px;top:23px;width:40px;height:12px;background:linear-gradient(#5a5a58,#3a3a40);"></div></div>
 <div class="a" style="left:4px;top:117px;width:199px;height:6px;background:#52c6cc"></div>
 <!-- right desk photo -->
 <div class="a" style="left:507px;top:0;width:195px;height:124px;background:repeating-linear-gradient(90deg,#e6e6ea 0 14px,#cfcfd4 14px 15px),linear-gradient(90deg,#d8d8dc,#ececef)"></div>
 <div class="a" style="left:507px;top:101px;width:195px;height:23px;background:linear-gradient(#c8c8cc 0,#eeeef0 12%,#f2f2f4 60%,#dcdce0 100%)"></div>
 <div class="a" style="left:519px;top:17px;width:117px;height:71px;background:#111;border-radius:2px"></div>
 <div class="a" style="left:521px;top:19px;width:113px;height:66px;background:#fdfdfd"></div>
 <div class="a" style="left:519px;top:88px;width:117px;height:12px;background:linear-gradient(#e8e8ea,#cfcfd3);border-radius:0 0 2px 2px"></div>
 <div class="a" style="left:566px;top:100px;width:24px;height:8px;background:linear-gradient(#b8b8bc,#d8d8dc)"></div>
 <div class="t" style="left:524px;top:27px;font-size:4.8px;color:#222;font-family:'Liberation Serif',serif">Тақырыбы:  <b style="font-size:5.5px">«Электронды кесте.</b></div>
 <div class="t" style="left:548px;top:34px;font-size:5.5px;color:#222;font-family:'Liberation Serif',serif;font-weight:bold">Диаграммалар (charts)»</div>
 <div class="t" style="left:526px;top:42px;font-size:4.2px;color:#333;font-family:'Liberation Serif',serif;line-height:6.5px">Үйренетінім:<br>Excel кестесінің мәліметтерін диаграммалар құрастыру<br>&nbsp;&nbsp;Критерийлер:<br>&nbsp;-диаграмманың түрлері мен типтерін білу<br>&nbsp;- кестенің деректерін графикалық түрде<br>&nbsp;&nbsp;ұсыну (диаграммалар құру) дағды.</div>
 <div class="a" style="left:552px;top:90px;width:15px;height:14px;background:#e8ec70;transform:rotate(-8deg)"></div>
 <div class="a" style="left:612px;top:92px;width:18px;height:18px;border-radius:50%;background:#f4f4f0;border:2px solid #222"></div>
 <div class="a" style="left:561px;top:110px;width:60px;height:10px;background:#f0f0f2;border:1px solid #c8c8cc"></div>
 <div class="a" style="left:645px;top:95px;width:54px;height:20px;background:linear-gradient(#3a6a4a 0%,#2a5a3a 50%,#506a50 70%,#1a3a2a 100%)"></div>
 <div class="a" style="left:646px;top:117px;width:50px;height:5px;background:#7a7a80"></div>
 <div class="a" style="left:657px;top:80px;width:12px;height:15px;background:#d8a860"></div>
 <div class="a" style="left:655px;top:68px;width:16px;height:12px;background:linear-gradient(90deg,#d04040,#e8c040,#40a040,#4060c0)"></div>
 <div class="a" style="left:645px;top:13px;width:52px;height:44px;background:#f2f2f4;border:1px solid #d8d8dc;transform:rotate(-4deg)"></div>
 <div class="a" style="left:659px;top:5px;width:12px;height:14px;background:#e8f060"></div>
 <div class="a" style="left:675px;top:12px;width:12px;height:12px;background:#f8b0e0"></div>
 <div class="a" style="left:639px;top:52px;width:14px;height:14px;background:#f8b0e0"></div>
 <div class="a" style="left:670px;top:59px;width:12px;height:15px;background:#e8f060"></div>
 <div class="a" style="left:509px;top:55px;width:14px;height:14px;border-radius:50%;background:radial-gradient(#a888b8,#705a80 70%,transparent 71%)"></div>
 <div class="a" style="left:512px;top:68px;width:7px;height:48px;background:linear-gradient(90deg,#ccc,#f0f0f0,#bbb);border-radius:2px"></div>
 <!-- center title -->
 <div class="t" style="left:232px;top:14.5px;font-family:'Liberation Serif',serif;font-weight:bold;font-size:14.6px;line-height:1;color:#c72530">Сабақты зерттеуді қалай бастадық?</div>
 <div class="a" style="left:216px;top:45px;width:262px;font-family:'Liberation Serif',serif;font-weight:bold;font-size:11.7px;line-height:13.6px;color:#1f2a5c;text-align:center;white-space:nowrap"><span style="color:#c72530">4-топтың зерттеу сұрағы:</span>«Шығармашылық<br>тапсырмалар арқылы 8 «Б» сынып<br>оқушыларының танымдық белсенділігін қалай<br>дамытуға болады?»</div>
 <!-- bottom center text -->
 <div class="a" style="left:219px;top:305px;width:258px;font-family:'Liberation Serif',serif;font-weight:bold;font-size:14.6px;line-height:17.4px;color:#d0202a;text-align:center">Топ модераторы:информатика<br>пәні мұғалімі<br><span style="color:#1f2a5c">Сағындық А.О</span></div>
 <!-- arrows -->
 <svg class="a" style="left:0;top:0" width="702" height="395" viewBox="0 0 702 395">
  <defs>
   <linearGradient id="gO" gradientUnits="userSpaceOnUse" x1="216" y1="115" x2="381" y2="242"><stop offset="0" stop-color="#fcc36c"/><stop offset=".6" stop-color="#f9ad3a"/><stop offset="1" stop-color="#f79c1a"/></linearGradient>
   <linearGradient id="gP" gradientUnits="userSpaceOnUse" x1="314" y1="156" x2="483" y2="288"><stop offset="0" stop-color="#ef999e"/><stop offset=".5" stop-color="#ec727a"/><stop offset="1" stop-color="#e6434c"/></linearGradient>
   <linearGradient id="gT" gradientUnits="userSpaceOnUse" x1="384" y1="209" x2="482" y2="110"><stop offset="0" stop-color="#3aa0ad"/><stop offset=".5" stop-color="#31b6c6"/><stop offset="1" stop-color="#21cbe4"/></linearGradient>
   <linearGradient id="gU" gradientUnits="userSpaceOnUse" x1="212" y1="289" x2="315" y2="187"><stop offset="0" stop-color="#c394d8"/><stop offset=".5" stop-color="#9a62b8"/><stop offset="1" stop-color="#6e3a8c"/></linearGradient>
   <filter id="sh" x="-20%" y="-20%" width="140%" height="140%"><feGaussianBlur in="SourceAlpha" stdDeviation="5"/><feOffset dx="3" dy="5"/><feComponentTransfer><feFuncA type="linear" slope=".3"/></feComponentTransfer><feMerge><feMergeNode/><feMergeNode in="SourceGraphic"/></feMerge></filter>
  </defs>
  <g filter="url(#sh)" stroke-linejoin="round" stroke-width="10">
   <polygon points="422.0,111.0 481.5,111.0 481.5,169.0 461.9,169.0 423.0,207.9 385.1,170.0 436.1,119.0 422.0,119.0" fill="url(#gT)" stroke="url(#gT)"/>
   <polygon points="213.0,288.0 213.0,232.0 220.0,232.0 220.0,247.1 279.0,188.1 313.4,222.5 255.9,280.0 271.0,280.0 271.0,288.0" fill="url(#gU)" stroke="url(#gU)"/>
   <polygon points="217.0,116.0 273.0,116.0 273.0,124.0 260.9,124.0 377.9,241.0 305.1,241.0 235.1,171.0 217.0,171.0" fill="url(#gO)" stroke="url(#gO)"/>
   <polygon points="317.0,157.5 387.4,157.5 473.0,243.1 473.0,229.0 482.0,229.0 482.0,287.0 422.0,287.0 422.0,280.0 439.0,280.0" fill="url(#gP)" stroke="url(#gP)"/>
   <polygon points="305,152.5 389.5,152.5 412,175 327.5,175" fill="url(#gP)"/>
   <polygon points="390,246 303,246 283,226 370,226" fill="url(#gO)"/>
  </g>
  <polygon points="301,156 308,156 350,198 343,198" fill="#4a2858"/>
  <polygon points="347,202 354,202 398,246 391,246" fill="#1a6a6e"/>
 </svg>
 <div class="t" style="left:272px;top:173px;transform:translate(-50%,-50%) rotate(45deg);font-family:'Liberation Serif',serif;font-weight:bold;font-size:14.6px;color:#111">№1 зерттеу сабағы</div>
 <div class="t" style="left:414.5px;top:222px;transform:translate(-50%,-50%) rotate(45deg);font-family:'Liberation Serif',serif;font-weight:bold;font-size:14.8px;color:#111">№4 зерттеу сабағы</div>
 <div class="t" style="left:449.7px;top:145px;transform:translate(-50%,-50%) rotate(-45deg);font-family:'Liberation Serif',serif;font-weight:bold;font-size:14.6px;line-height:19px;color:#111;text-align:center">№3 зерттеу<br>сабағы</div>
 <div class="t" style="left:249px;top:252px;transform:translate(-50%,-50%) rotate(-45deg);font-family:'Liberation Serif',serif;font-weight:bold;font-size:14.6px;line-height:19px;color:#111;text-align:center">№2 зерттеу<br>сабағы</div>
 <!-- left names -->
 <svg class="a" style="left:3px;top:142px" width="30" height="30" viewBox="0 0 30 30"><g fill="#f6b347"><rect x="12" y="0.5" width="6" height="8" rx="2" transform="rotate(0 15 15)"/><rect x="12" y="0.5" width="6" height="8" rx="2" transform="rotate(45 15 15)"/><rect x="12" y="0.5" width="6" height="8" rx="2" transform="rotate(90 15 15)"/><rect x="12" y="0.5" width="6" height="8" rx="2" transform="rotate(135 15 15)"/><rect x="12" y="0.5" width="6" height="8" rx="2" transform="rotate(180 15 15)"/><rect x="12" y="0.5" width="6" height="8" rx="2" transform="rotate(225 15 15)"/><rect x="12" y="0.5" width="6" height="8" rx="2" transform="rotate(270 15 15)"/><rect x="12" y="0.5" width="6" height="8" rx="2" transform="rotate(315 15 15)"/><circle cx="15" cy="15" r="10.5"/></g><circle cx="15" cy="15" r="5" fill="#eef0f4"/></svg>
 <div class="t" style="left:39px;top:135px;font-family:'Liberation Serif',serif;font-weight:bold;font-size:17.2px;line-height:1;color:#1c2b5a">Қазбек А.С</div>
 <div class="a" style="left:39px;top:155px;font-family:'Liberation Serif',serif;-webkit-text-stroke:.25px;font-size:11.5px;line-height:13.6px;color:#2a3560;white-space:nowrap">Сабақтың тақырыбы: «Мен<br>әлемді сүйемін»</div>
 <svg class="a" style="left:5px;top:220px" width="27" height="28" viewBox="0 0 27 28"><path d="M3 3 H14 L18 7 M21 15 V25 H3 V3" fill="none" stroke="#7b4a8c" stroke-width="3"/><path d="M9 21 L10 16 L21 5 L25 9 L14 20 Z" fill="#7b4a8c"/></svg>
 <div class="t" style="left:35px;top:207.5px;font-family:'Liberation Serif',serif;font-weight:bold;font-size:17.4px;line-height:1;color:#1c2b5a">Сүлейменова Д.Н</div>
 <div class="a" style="left:35px;top:227px;font-family:'Liberation Serif',serif;-webkit-text-stroke:.25px;font-size:11.5px;line-height:14.6px;color:#2a3560;white-space:nowrap">Сабақтың тақырыбы: «Үстел<br>ойындарының тұжырымдамасы»</div>
 <!-- right names -->
 <svg class="a" style="left:496px;top:144px" width="34" height="28" viewBox="0 0 34 28"><rect x="0" y="5" width="34" height="23" rx="2" fill="#19a2b3"/><rect x="11" y="1" width="12" height="6" rx="2" fill="none" stroke="#19a2b3" stroke-width="2.5"/><rect x="4" y="5" width="2" height="23" fill="#eef0f2"/><rect x="28" y="5" width="2" height="23" fill="#eef0f2"/><rect x="14" y="4" width="6" height="2" fill="#eef0f2"/></svg>
 <div class="t" style="left:533px;top:132px;font-family:'Liberation Serif',serif;font-weight:bold;font-size:17.4px;line-height:1;color:#1c2b5a">Сағындық А.О</div>
 <div class="a" style="left:533px;top:152px;font-family:'Liberation Serif',serif;-webkit-text-stroke:.25px;font-size:11.5px;line-height:14px;color:#2a3560;white-space:nowrap">Сабақтың&nbsp; тақырыбы:<br>«Электронды&nbsp; кесте.<br>Диаграммалар&nbsp; (charts)»</div>
 <svg class="a" style="left:500px;top:213px" width="29" height="32" viewBox="0 0 29 32"><path d="M2 2 H27 V20 L19 30 H2 Z" fill="none" stroke="#e0686e" stroke-width="3"/><path d="M27 20 L19 30 V22 Z" fill="#e0686e"/><line x1="7" y1="10" x2="22" y2="10" stroke="#e0686e" stroke-width="2.5"/><line x1="7" y1="15" x2="22" y2="15" stroke="#e0686e" stroke-width="2.5"/><line x1="7" y1="20" x2="15" y2="20" stroke="#e0686e" stroke-width="2.5"/></svg>
 <div class="t" style="left:529px;top:201px;font-family:'Liberation Serif',serif;font-weight:bold;font-size:17.2px;line-height:1;color:#1c2b5a">Байсүйеуова Г.Б</div>
 <div class="a" style="left:529px;top:222px;font-family:'Liberation Serif',serif;-webkit-text-stroke:.25px;font-size:11.5px;line-height:13px;color:#2a3560;white-space:nowrap">Сабақтың тақырыбы: «Қазақтың<br>ұлттық сәндік-&nbsp; қолданбалы<br>бұйымдары»</div>
 <!-- miga panel -->
 <div class="a" style="left:4px;top:270px;width:199px;height:125px;background:linear-gradient(90deg,#e9c48e,#f3dcb0 50%,#e9c48e)"></div>
 <div class="a" style="left:12px;top:279px;width:183px;height:107px;background:#fdfcfa;border:1px solid #e8d0a8;box-shadow:0 0 0 2px #f6ead4"></div>
 <div class="a" style="left:4px;top:328px;width:12px;height:10px;background:#4a3a30"></div>
 <div class="a" style="left:191px;top:328px;width:12px;height:10px;background:#4a3a30"></div>
 <div class="t" style="left:62px;top:281px;font-family:'Liberation Serif',serif;font-size:11.2px;color:#c8202a">«Миға шабуыл»</div>
 <div class="a" style="left:30px;top:295px;width:40px;height:26px;background:linear-gradient(150deg,#3a2820 0%,#8a5a40 40%,#5a3a28 70%,#2a1a10 100%);transform:skew(-10deg,10deg)"></div>
 <div class="a" style="left:79px;top:301px;width:49px;height:34px;background:linear-gradient(135deg,#7a6a5a 0%,#b8a890 35%,#3a8a80 60%,#d8d0c0 100%)"></div>
 <div class="a" style="left:140px;top:291px;width:41px;height:37px;background:linear-gradient(120deg,#d8b898 0%,#a86a40 40%,#6a6a78 70%,#c89070 100%)"></div>
 <div class="a" style="left:22px;top:330px;width:37px;height:37px;background:linear-gradient(160deg,#8a5a30 0%,#c89058 35%,#6a4a20 65%,#b88050 100%)"></div>
 <div class="a" style="left:64px;top:334px;width:32px;height:33px;background:#f4f2f0;overflow:hidden"><div class="a" style="left:9px;top:4px;width:16px;height:20px;border-radius:50%;background:#2a1a18"></div><div class="a" style="left:11px;top:8px;width:12px;height:15px;border-radius:45%;background:#e8c4a8"></div><div class="a" style="left:4px;top:24px;width:28px;height:14px;border-radius:40% 40% 0 0;background:#3a1a20"></div></div>
 <div class="a" style="left:113px;top:330px;width:52px;height:37px;background:linear-gradient(#ddd,#bbb);overflow:hidden"><div class="a" style="left:0;top:0;width:52px;height:16px;background:repeating-linear-gradient(90deg,#222 0 6px,#e8e8e8 6px 12px)"></div><div class="a" style="left:4px;top:12px;width:16px;height:26px;border-radius:45% 45% 0 0;background:#2a2a2a"></div><div class="a" style="left:8px;top:9px;width:8px;height:9px;border-radius:50%;background:#b8b0a8"></div><div class="a" style="left:30px;top:14px;width:18px;height:24px;border-radius:45% 45% 0 0;background:#333"></div><div class="a" style="left:35px;top:11px;width:8px;height:9px;border-radius:50%;background:#a8a098"></div></div>
 <div class="t" style="left:40px;top:370px;font-family:'Liberation Serif',serif;font-size:5.7px;color:#222">Бұл суреттердің қандай байланысы көріп тұрмыз?</div>
 <!-- gallery panel -->
 <div class="a" style="left:509px;top:270px;width:192px;height:125px;background:linear-gradient(90deg,#fbfaf4,#fdfcf7 60%,#f8f6ee)"></div>
 <div class="t" style="left:540px;top:272px;font-family:'Liberation Serif',serif;font-weight:bold;font-size:10.5px;color:#111">«Галереяны&nbsp; шарлау»&nbsp; әдісі</div>
 <div class="a" style="left:513px;top:289px;width:182px;height:4px;background:repeating-linear-gradient(90deg,#fff 0 4px,#9aa8b0 4px 7px,#d8dde0 7px 22px,#fff 22px 28px)"></div>
 <div class="a" style="left:514px;top:294px;width:180px;height:4px;background:linear-gradient(90deg,#f6ecd8 0 10%,#efd9a8 10% 45%,#f6ecd8 45% 60%,#efd9a8 60% 100%)"></div>
 <div class="a" style="left:517px;top:300px;width:40px;height:2px;background:#d8d4cc"></div>
 <div class="a" style="left:515px;top:306px;width:176px;height:84px;background:#fcedbf"></div>
 <div class="a" style="left:543px;top:311px;width:31px;height:23px;background:#fff;box-shadow:0 1px 2px rgba(0,0,0,.25)"></div><div class="a" style="left:545px;top:314px;width:27px;height:18px;background:radial-gradient(ellipse,#8a7a50 0%,#2a2418 40%,#111 70%)"></div>
 <div class="a" style="left:572px;top:309px;width:28px;height:20px;background:#fff;box-shadow:0 1px 2px rgba(0,0,0,.25)"></div><div class="a" style="left:574px;top:312px;width:24px;height:15px;background:radial-gradient(ellipse,#c89a50 0%,#7a5030 50%,#4a3a2a 80%)"></div>
 <div class="a" style="left:616px;top:309px;width:31px;height:22px;background:#fff;box-shadow:0 1px 2px rgba(0,0,0,.25)"></div><div class="a" style="left:618px;top:311px;width:27px;height:18px;background:linear-gradient(#8a96b0,#4a5a7a 60%,#6a7088)"></div>
 <div class="a" style="left:645px;top:310px;width:31px;height:23px;background:#fff;box-shadow:0 1px 2px rgba(0,0,0,.25)"></div><div class="a" style="left:647.5px;top:312px;width:26.5px;height:18.6px;background:radial-gradient(ellipse,#f0b070 0%,#c06020 45%,#8a4a30 80%)"></div>
 <div class="a" style="left:519px;top:327px;width:33px;height:26px;background:#fff;box-shadow:0 1px 2px rgba(0,0,0,.25)"></div><div class="a" style="left:521px;top:329.7px;width:29px;height:21px;background:linear-gradient(90deg,#8a5a60,#c87a80 50%,#e0c0c8)"></div>
 <div class="a" style="left:565px;top:329px;width:33px;height:26px;background:#fff;box-shadow:0 1px 2px rgba(0,0,0,.25)"></div>
 <div class="a" style="left:574px;top:335px;width:6px;height:14px;background:#4a7a56;border-radius:45%"></div><div class="a" style="left:584px;top:335px;width:6px;height:14px;background:#4a7a56;border-radius:45%"></div>
 <div class="a" style="left:595px;top:322px;width:29px;height:22px;background:#fff;box-shadow:0 1px 2px rgba(0,0,0,.25)"></div><div class="a" style="left:597px;top:324px;width:25px;height:18px;background:linear-gradient(#a8b0b8,#3a4048 50%,#9aa0a8)"></div>
 <div class="a" style="left:544px;top:344px;width:30px;height:25px;background:#fff;box-shadow:0 1px 2px rgba(0,0,0,.25)"></div><div class="a" style="left:546px;top:346.6px;width:26px;height:20.4px;background:repeating-linear-gradient(90deg,#6ab8d0 0 3px,#a8d8e8 3px 5px)"></div>
 <div class="a" style="left:596px;top:344px;width:34px;height:24px;background:#fff;box-shadow:0 1px 2px rgba(0,0,0,.25)"></div><div class="a" style="left:598.7px;top:346.6px;width:29px;height:19.4px;background:radial-gradient(ellipse,#3a3a3a 0%,#8a8a60 40%,#c8c8b0 80%)"></div>
 <div class="a" style="left:624px;top:337px;width:28px;height:9.6px;background:#fff;box-shadow:0 1px 1px rgba(0,0,0,.15)"></div>
 <div class="a" style="left:654px;top:339px;width:28px;height:8.5px;background:#fff;box-shadow:0 1px 1px rgba(0,0,0,.15)"></div>
 <div class="a" style="left:629.7px;top:353px;width:28px;height:8.6px;background:#fff;box-shadow:0 1px 1px rgba(0,0,0,.15)"></div>
 <div class="a" style="left:517px;top:359.7px;width:28px;height:8.3px;background:#fff;box-shadow:0 1px 1px rgba(0,0,0,.15)"></div>
 <div class="a" style="left:574px;top:359.7px;width:21px;height:8.3px;background:#fff;box-shadow:0 1px 1px rgba(0,0,0,.15)"></div>
 <div class="a" style="left:528px;top:374.8px;width:30px;height:8.2px;background:#fff;box-shadow:0 1px 1px rgba(0,0,0,.15)"></div>
 <div class="a" style="left:559px;top:374.8px;width:28px;height:8.2px;background:#fff;box-shadow:0 1px 1px rgba(0,0,0,.15)"></div>
 <div class="a" style="left:622px;top:370px;width:29px;height:8.5px;background:#fff;box-shadow:0 1px 1px rgba(0,0,0,.15)"></div>
 <div class="a" style="left:588px;top:363.5px;width:28px;height:26px;background:#f4c0a0;border-radius:45% 45% 35% 35%;opacity:.85"></div>
 <div class="a" style="left:677.5px;top:378.5px;width:10.5px;height:10.5px;border-radius:50%;background:#3a80c8"></div>
<div class="a" style="left:4px;top:0px;width:199px;height:124px;background:linear-gradient(90deg,#f4e8c0 0%,#eedcaa 70%,#222 72%,#303040 100%)"></div><div class="a" style="left:4px;top:270px;width:199px;height:125px;background:radial-gradient(circle at 28% 55%,#e080e8 0,#9a40c0 14%,transparent 24%),radial-gradient(circle at 58% 55%,#b070e0 0,#6a30b0 14%,transparent 24%),linear-gradient(90deg,#2a1060 0%,#3a1a80 78%,#222 80%,#444 100%)"></div><div class="a" style="left:507px;top:0px;width:195px;height:124px;background:linear-gradient(110deg,#2a4a7a 0%,#7a9ac8 30%,#3a5a8a 60%,#6a88b0 85%,#222 100%)"></div><div class="a" style="left:509px;top:270px;width:192px;height:125px;background:linear-gradient(90deg,#c8d8f0 0%,#a8c0e8 40%,#e0e8f0 70%,#444 78%,#ccc 100%)"></div></div></div>
<div class="a" style="left:127px;top:291px;width:137px;height:77px;overflow:hidden;box-shadow:0 0 1px rgba(0,0,0,.35)"><div class="a" style="left:0;top:0;width:702px;height:395px;transform:scale(0.19516);transform-origin:0 0;background:linear-gradient(90deg,#e8e9ef 0%,#eff0f4 25%,#f9f9fb 40%,#fdfdfe 55%,#f6f6f8 72%,#ecedf1 100%)">
 <div class="a" style="left:0;top:0;width:4px;height:395px;background:#f6f6f8"></div>
 <!-- left task panel -->
 <div class="a" style="left:4px;top:0;width:199px;height:124px;background:#fff"></div>
 <div class="a" style="left:4px;top:0;width:199px;height:19px;background:#4fcfd5"></div>
 <div class="a" style="left:34px;top:2px;width:14px;height:15px;border-radius:4px;background:linear-gradient(135deg,#a45cb0,#6a2c84)"></div>
 <div class="a" style="left:37px;top:5px;width:4px;height:9px;background:#f0d8f0;border-radius:1px"></div>
 <div class="a" style="left:42px;top:6px;width:4px;height:8px;background:#fff;border-radius:1px"></div>
 <div class="t" style="left:54px;top:7px;font-size:5.8px;color:#f4fbfb">ШЫҒАРМАШЫЛЫҚ ЖҰМЫС</div>
 <div class="t" style="left:14px;top:23px;font-size:5.5px;color:#222;font-weight:bold">Тапсырма</div>
 <div class="t" style="left:15px;top:31px;font-size:5.5px;color:#222">«Қазақстанның қандай жерлерін әлемнің жеті кереметіне қосар едің?»</div>
 <div class="t" style="left:14px;top:37px;font-size:5.5px;color:#222">тақырыбында  сурет салу</div>
 <div class="a" style="left:21.2px;top:55.3px;width:33.3px;height:22.4px;background:linear-gradient(#dfe4e6 0%,#8a9a7a 18%,#4a6a3a 50%,#5a7040 100%);overflow:hidden"><div class="a" style="left:16px;top:0px;width:12px;height:8px;background:#b08070;"></div><div class="a" style="left:0px;top:9px;width:33px;height:5px;background:#a89078;transform:rotate(-12deg)"></div><div class="a" style="left:14px;top:12px;width:20px;height:4px;background:#c8b8a0;transform:rotate(35deg)"></div></div>
 <div class="a" style="left:55.7px;top:45.6px;width:35px;height:32px;background:linear-gradient(#e8ecef 0%,#8a9898 12%,#4a5a48 30%,#3a4a2a 60%,#6a7a48 100%);overflow:hidden"><div class="a" style="left:12px;top:2px;width:14px;height:16px;background:#2a3a22;border-radius:50% 50% 10% 10%"></div><div class="a" style="left:0px;top:18px;width:18px;height:14px;background:repeating-linear-gradient(60deg,#c8c8a0 0 2px,#4a5a30 2px 5px);"></div></div>
 <div class="a" style="left:93.3px;top:45.6px;width:34.5px;height:32px;background:linear-gradient(#2e5cc0 0%,#5a80c0 25%,#7a8aa0 45%,#4a5060 70%,#1a1a22 85%,#c8c8d0 100%);overflow:hidden"><div class="a" style="left:15px;top:3px;width:5px;height:23px;background:#c8ccd4;"></div><div class="a" style="left:11px;top:8px;width:13px;height:2px;background:#c0c4cc;"></div><div class="a" style="left:22px;top:14px;width:12px;height:10px;background:rgba(230,230,235,.6);border-radius:40%"></div></div>
 <div class="a" style="left:130.2px;top:45.6px;width:34.5px;height:32px;background:linear-gradient(90deg,#6a3020 0%,#b86a48 20%,#8a4a30 40%,#c87a58 60%,#9a5a3a 80%,#6a3a28 100%);overflow:hidden"><div class="a" style="left:8px;top:8px;width:18px;height:6px;background:rgba(60,30,20,.5);"></div><div class="a" style="left:6px;top:20px;width:22px;height:3px;background:rgba(230,160,120,.5);"></div></div>
 <div class="a" style="left:21.2px;top:80.1px;width:46px;height:35.1px;background:linear-gradient(#141c40 0%,#2a3a6a 22%,#8a5a30 35%,#f0a050 55%,#c06a28 70%,#3a4a7a 85%,#8aa0c8 100%);overflow:hidden"><div class="a" style="left:0px;top:17px;width:46px;height:3px;background:repeating-linear-gradient(90deg,#fbd080 0 3px,#6a3a20 3px 6px);"></div><div class="a" style="left:0px;top:23px;width:46px;height:3px;background:repeating-linear-gradient(90deg,#fbd080 0 3px,#6a3a20 3px 6px);"></div></div>
 <div class="a" style="left:69px;top:80.1px;width:46.7px;height:35.1px;background:linear-gradient(#7aa0d8 0%,#b8cce8 30%,#e8e0c8 60%,#5a5a50 82%,#a0a8b0 100%);overflow:hidden"><div class="a" style="left:16px;top:6px;width:14px;height:10px;background:#e8dcb0;border-radius:50% 50% 0 0"></div><div class="a" style="left:11px;top:14px;width:24px;height:14px;background:#e8d8a8;"></div><div class="a" style="left:5px;top:4px;width:2px;height:24px;background:#6a6050;"></div><div class="a" style="left:39px;top:4px;width:2px;height:24px;background:#6a6050;"></div><div class="a" style="left:19px;top:29px;width:8px;height:6px;background:#c8d0d8;"></div></div>
 <div class="a" style="left:117.5px;top:80.1px;width:47.2px;height:35.1px;background:linear-gradient(#a8c4e4 0%,#c0d0e0 30%,#8a8a70 65%,#4a4a48 100%);overflow:hidden"><div class="a" style="left:6px;top:4px;width:0;height:0;border-left:18px solid transparent;border-right:18px solid transparent;border-bottom:19px solid #e4dccc"></div><div class="a" style="left:4px;top:23px;width:40px;height:12px;background:linear-gradient(#5a5a58,#3a3a40);"></div></div>
 <div class="a" style="left:4px;top:117px;width:199px;height:6px;background:#52c6cc"></div>
 <!-- right desk photo -->
 <div class="a" style="left:507px;top:0;width:195px;height:124px;background:repeating-linear-gradient(90deg,#e6e6ea 0 14px,#cfcfd4 14px 15px),linear-gradient(90deg,#d8d8dc,#ececef)"></div>
 <div class="a" style="left:507px;top:101px;width:195px;height:23px;background:linear-gradient(#c8c8cc 0,#eeeef0 12%,#f2f2f4 60%,#dcdce0 100%)"></div>
 <div class="a" style="left:519px;top:17px;width:117px;height:71px;background:#111;border-radius:2px"></div>
 <div class="a" style="left:521px;top:19px;width:113px;height:66px;background:#fdfdfd"></div>
 <div class="a" style="left:519px;top:88px;width:117px;height:12px;background:linear-gradient(#e8e8ea,#cfcfd3);border-radius:0 0 2px 2px"></div>
 <div class="a" style="left:566px;top:100px;width:24px;height:8px;background:linear-gradient(#b8b8bc,#d8d8dc)"></div>
 <div class="t" style="left:524px;top:27px;font-size:4.8px;color:#222;font-family:'Liberation Serif',serif">Тақырыбы:  <b style="font-size:5.5px">«Электронды кесте.</b></div>
 <div class="t" style="left:548px;top:34px;font-size:5.5px;color:#222;font-family:'Liberation Serif',serif;font-weight:bold">Диаграммалар (charts)»</div>
 <div class="t" style="left:526px;top:42px;font-size:4.2px;color:#333;font-family:'Liberation Serif',serif;line-height:6.5px">Үйренетінім:<br>Excel кестесінің мәліметтерін диаграммалар құрастыру<br>&nbsp;&nbsp;Критерийлер:<br>&nbsp;-диаграмманың түрлері мен типтерін білу<br>&nbsp;- кестенің деректерін графикалық түрде<br>&nbsp;&nbsp;ұсыну (диаграммалар құру) дағды.</div>
 <div class="a" style="left:552px;top:90px;width:15px;height:14px;background:#e8ec70;transform:rotate(-8deg)"></div>
 <div class="a" style="left:612px;top:92px;width:18px;height:18px;border-radius:50%;background:#f4f4f0;border:2px solid #222"></div>
 <div class="a" style="left:561px;top:110px;width:60px;height:10px;background:#f0f0f2;border:1px solid #c8c8cc"></div>
 <div class="a" style="left:645px;top:95px;width:54px;height:20px;background:linear-gradient(#3a6a4a 0%,#2a5a3a 50%,#506a50 70%,#1a3a2a 100%)"></div>
 <div class="a" style="left:646px;top:117px;width:50px;height:5px;background:#7a7a80"></div>
 <div class="a" style="left:657px;top:80px;width:12px;height:15px;background:#d8a860"></div>
 <div class="a" style="left:655px;top:68px;width:16px;height:12px;background:linear-gradient(90deg,#d04040,#e8c040,#40a040,#4060c0)"></div>
 <div class="a" style="left:645px;top:13px;width:52px;height:44px;background:#f2f2f4;border:1px solid #d8d8dc;transform:rotate(-4deg)"></div>
 <div class="a" style="left:659px;top:5px;width:12px;height:14px;background:#e8f060"></div>
 <div class="a" style="left:675px;top:12px;width:12px;height:12px;background:#f8b0e0"></div>
 <div class="a" style="left:639px;top:52px;width:14px;height:14px;background:#f8b0e0"></div>
 <div class="a" style="left:670px;top:59px;width:12px;height:15px;background:#e8f060"></div>
 <div class="a" style="left:509px;top:55px;width:14px;height:14px;border-radius:50%;background:radial-gradient(#a888b8,#705a80 70%,transparent 71%)"></div>
 <div class="a" style="left:512px;top:68px;width:7px;height:48px;background:linear-gradient(90deg,#ccc,#f0f0f0,#bbb);border-radius:2px"></div>
 <!-- center title -->
 <div class="t" style="left:232px;top:14.5px;font-family:'Liberation Serif',serif;font-weight:bold;font-size:14.6px;line-height:1;color:#c72530">Сабақты зерттеуді қалай бастадық?</div>
 <div class="a" style="left:216px;top:45px;width:262px;font-family:'Liberation Serif',serif;font-weight:bold;font-size:11.7px;line-height:13.6px;color:#1f2a5c;text-align:center;white-space:nowrap"><span style="color:#c72530">4-топтың зерттеу сұрағы:</span>«Шығармашылық<br>тапсырмалар арқылы 8 «Б» сынып<br>оқушыларының танымдық белсенділігін қалай<br>дамытуға болады?»</div>
 <!-- bottom center text -->
 <div class="a" style="left:219px;top:305px;width:258px;font-family:'Liberation Serif',serif;font-weight:bold;font-size:14.6px;line-height:17.4px;color:#d0202a;text-align:center">Топ модераторы:информатика<br>пәні мұғалімі<br><span style="color:#1f2a5c">Сағындық А.О</span></div>
 <!-- arrows -->
 <svg class="a" style="left:0;top:0" width="702" height="395" viewBox="0 0 702 395">
  <defs>
   <linearGradient id="gO" gradientUnits="userSpaceOnUse" x1="216" y1="115" x2="381" y2="242"><stop offset="0" stop-color="#fcc36c"/><stop offset=".6" stop-color="#f9ad3a"/><stop offset="1" stop-color="#f79c1a"/></linearGradient>
   <linearGradient id="gP" gradientUnits="userSpaceOnUse" x1="314" y1="156" x2="483" y2="288"><stop offset="0" stop-color="#ef999e"/><stop offset=".5" stop-color="#ec727a"/><stop offset="1" stop-color="#e6434c"/></linearGradient>
   <linearGradient id="gT" gradientUnits="userSpaceOnUse" x1="384" y1="209" x2="482" y2="110"><stop offset="0" stop-color="#3aa0ad"/><stop offset=".5" stop-color="#31b6c6"/><stop offset="1" stop-color="#21cbe4"/></linearGradient>
   <linearGradient id="gU" gradientUnits="userSpaceOnUse" x1="212" y1="289" x2="315" y2="187"><stop offset="0" stop-color="#c394d8"/><stop offset=".5" stop-color="#9a62b8"/><stop offset="1" stop-color="#6e3a8c"/></linearGradient>
   <filter id="sh" x="-20%" y="-20%" width="140%" height="140%"><feGaussianBlur in="SourceAlpha" stdDeviation="5"/><feOffset dx="3" dy="5"/><feComponentTransfer><feFuncA type="linear" slope=".3"/></feComponentTransfer><feMerge><feMergeNode/><feMergeNode in="SourceGraphic"/></feMerge></filter>
  </defs>
  <g filter="url(#sh)" stroke-linejoin="round" stroke-width="10">
   <polygon points="422.0,111.0 481.5,111.0 481.5,169.0 461.9,169.0 423.0,207.9 385.1,170.0 436.1,119.0 422.0,119.0" fill="url(#gT)" stroke="url(#gT)"/>
   <polygon points="213.0,288.0 213.0,232.0 220.0,232.0 220.0,247.1 279.0,188.1 313.4,222.5 255.9,280.0 271.0,280.0 271.0,288.0" fill="url(#gU)" stroke="url(#gU)"/>
   <polygon points="217.0,116.0 273.0,116.0 273.0,124.0 260.9,124.0 377.9,241.0 305.1,241.0 235.1,171.0 217.0,171.0" fill="url(#gO)" stroke="url(#gO)"/>
   <polygon points="317.0,157.5 387.4,157.5 473.0,243.1 473.0,229.0 482.0,229.0 482.0,287.0 422.0,287.0 422.0,280.0 439.0,280.0" fill="url(#gP)" stroke="url(#gP)"/>
   <polygon points="305,152.5 389.5,152.5 412,175 327.5,175" fill="url(#gP)"/>
   <polygon points="390,246 303,246 283,226 370,226" fill="url(#gO)"/>
  </g>
  <polygon points="301,156 308,156 350,198 343,198" fill="#4a2858"/>
  <polygon points="347,202 354,202 398,246 391,246" fill="#1a6a6e"/>
 </svg>
 <div class="t" style="left:272px;top:173px;transform:translate(-50%,-50%) rotate(45deg);font-family:'Liberation Serif',serif;font-weight:bold;font-size:14.6px;color:#111">№1 зерттеу сабағы</div>
 <div class="t" style="left:414.5px;top:222px;transform:translate(-50%,-50%) rotate(45deg);font-family:'Liberation Serif',serif;font-weight:bold;font-size:14.8px;color:#111">№4 зерттеу сабағы</div>
 <div class="t" style="left:449.7px;top:145px;transform:translate(-50%,-50%) rotate(-45deg);font-family:'Liberation Serif',serif;font-weight:bold;font-size:14.6px;line-height:19px;color:#111;text-align:center">№3 зерттеу<br>сабағы</div>
 <div class="t" style="left:249px;top:252px;transform:translate(-50%,-50%) rotate(-45deg);font-family:'Liberation Serif',serif;font-weight:bold;font-size:14.6px;line-height:19px;color:#111;text-align:center">№2 зерттеу<br>сабағы</div>
 <!-- left names -->
 <svg class="a" style="left:3px;top:142px" width="30" height="30" viewBox="0 0 30 30"><g fill="#f6b347"><rect x="12" y="0.5" width="6" height="8" rx="2" transform="rotate(0 15 15)"/><rect x="12" y="0.5" width="6" height="8" rx="2" transform="rotate(45 15 15)"/><rect x="12" y="0.5" width="6" height="8" rx="2" transform="rotate(90 15 15)"/><rect x="12" y="0.5" width="6" height="8" rx="2" transform="rotate(135 15 15)"/><rect x="12" y="0.5" width="6" height="8" rx="2" transform="rotate(180 15 15)"/><rect x="12" y="0.5" width="6" height="8" rx="2" transform="rotate(225 15 15)"/><rect x="12" y="0.5" width="6" height="8" rx="2" transform="rotate(270 15 15)"/><rect x="12" y="0.5" width="6" height="8" rx="2" transform="rotate(315 15 15)"/><circle cx="15" cy="15" r="10.5"/></g><circle cx="15" cy="15" r="5" fill="#eef0f4"/></svg>
 <div class="t" style="left:39px;top:135px;font-family:'Liberation Serif',serif;font-weight:bold;font-size:17.2px;line-height:1;color:#1c2b5a">Қазбек А.С</div>
 <div class="a" style="left:39px;top:155px;font-family:'Liberation Serif',serif;-webkit-text-stroke:.25px;font-size:11.5px;line-height:13.6px;color:#2a3560;white-space:nowrap">Сабақтың тақырыбы: «Мен<br>әлемді сүйемін»</div>
 <svg class="a" style="left:5px;top:220px" width="27" height="28" viewBox="0 0 27 28"><path d="M3 3 H14 L18 7 M21 15 V25 H3 V3" fill="none" stroke="#7b4a8c" stroke-width="3"/><path d="M9 21 L10 16 L21 5 L25 9 L14 20 Z" fill="#7b4a8c"/></svg>
 <div class="t" style="left:35px;top:207.5px;font-family:'Liberation Serif',serif;font-weight:bold;font-size:17.4px;line-height:1;color:#1c2b5a">Сүлейменова Д.Н</div>
 <div class="a" style="left:35px;top:227px;font-family:'Liberation Serif',serif;-webkit-text-stroke:.25px;font-size:11.5px;line-height:14.6px;color:#2a3560;white-space:nowrap">Сабақтың тақырыбы: «Үстел<br>ойындарының тұжырымдамасы»</div>
 <!-- right names -->
 <svg class="a" style="left:496px;top:144px" width="34" height="28" viewBox="0 0 34 28"><rect x="0" y="5" width="34" height="23" rx="2" fill="#19a2b3"/><rect x="11" y="1" width="12" height="6" rx="2" fill="none" stroke="#19a2b3" stroke-width="2.5"/><rect x="4" y="5" width="2" height="23" fill="#eef0f2"/><rect x="28" y="5" width="2" height="23" fill="#eef0f2"/><rect x="14" y="4" width="6" height="2" fill="#eef0f2"/></svg>
 <div class="t" style="left:533px;top:132px;font-family:'Liberation Serif',serif;font-weight:bold;font-size:17.4px;line-height:1;color:#1c2b5a">Сағындық А.О</div>
 <div class="a" style="left:533px;top:152px;font-family:'Liberation Serif',serif;-webkit-text-stroke:.25px;font-size:11.5px;line-height:14px;color:#2a3560;white-space:nowrap">Сабақтың&nbsp; тақырыбы:<br>«Электронды&nbsp; кесте.<br>Диаграммалар&nbsp; (charts)»</div>
 <svg class="a" style="left:500px;top:213px" width="29" height="32" viewBox="0 0 29 32"><path d="M2 2 H27 V20 L19 30 H2 Z" fill="none" stroke="#e0686e" stroke-width="3"/><path d="M27 20 L19 30 V22 Z" fill="#e0686e"/><line x1="7" y1="10" x2="22" y2="10" stroke="#e0686e" stroke-width="2.5"/><line x1="7" y1="15" x2="22" y2="15" stroke="#e0686e" stroke-width="2.5"/><line x1="7" y1="20" x2="15" y2="20" stroke="#e0686e" stroke-width="2.5"/></svg>
 <div class="t" style="left:529px;top:201px;font-family:'Liberation Serif',serif;font-weight:bold;font-size:17.2px;line-height:1;color:#1c2b5a">Байсүйеуова Г.Б</div>
 <div class="a" style="left:529px;top:222px;font-family:'Liberation Serif',serif;-webkit-text-stroke:.25px;font-size:11.5px;line-height:13px;color:#2a3560;white-space:nowrap">Сабақтың тақырыбы: «Қазақтың<br>ұлттық сәндік-&nbsp; қолданбалы<br>бұйымдары»</div>
 <!-- miga panel -->
 <div class="a" style="left:4px;top:270px;width:199px;height:125px;background:linear-gradient(90deg,#e9c48e,#f3dcb0 50%,#e9c48e)"></div>
 <div class="a" style="left:12px;top:279px;width:183px;height:107px;background:#fdfcfa;border:1px solid #e8d0a8;box-shadow:0 0 0 2px #f6ead4"></div>
 <div class="a" style="left:4px;top:328px;width:12px;height:10px;background:#4a3a30"></div>
 <div class="a" style="left:191px;top:328px;width:12px;height:10px;background:#4a3a30"></div>
 <div class="t" style="left:62px;top:281px;font-family:'Liberation Serif',serif;font-size:11.2px;color:#c8202a">«Миға шабуыл»</div>
 <div class="a" style="left:30px;top:295px;width:40px;height:26px;background:linear-gradient(150deg,#3a2820 0%,#8a5a40 40%,#5a3a28 70%,#2a1a10 100%);transform:skew(-10deg,10deg)"></div>
 <div class="a" style="left:79px;top:301px;width:49px;height:34px;background:linear-gradient(135deg,#7a6a5a 0%,#b8a890 35%,#3a8a80 60%,#d8d0c0 100%)"></div>
 <div class="a" style="left:140px;top:291px;width:41px;height:37px;background:linear-gradient(120deg,#d8b898 0%,#a86a40 40%,#6a6a78 70%,#c89070 100%)"></div>
 <div class="a" style="left:22px;top:330px;width:37px;height:37px;background:linear-gradient(160deg,#8a5a30 0%,#c89058 35%,#6a4a20 65%,#b88050 100%)"></div>
 <div class="a" style="left:64px;top:334px;width:32px;height:33px;background:#f4f2f0;overflow:hidden"><div class="a" style="left:9px;top:4px;width:16px;height:20px;border-radius:50%;background:#2a1a18"></div><div class="a" style="left:11px;top:8px;width:12px;height:15px;border-radius:45%;background:#e8c4a8"></div><div class="a" style="left:4px;top:24px;width:28px;height:14px;border-radius:40% 40% 0 0;background:#3a1a20"></div></div>
 <div class="a" style="left:113px;top:330px;width:52px;height:37px;background:linear-gradient(#ddd,#bbb);overflow:hidden"><div class="a" style="left:0;top:0;width:52px;height:16px;background:repeating-linear-gradient(90deg,#222 0 6px,#e8e8e8 6px 12px)"></div><div class="a" style="left:4px;top:12px;width:16px;height:26px;border-radius:45% 45% 0 0;background:#2a2a2a"></div><div class="a" style="left:8px;top:9px;width:8px;height:9px;border-radius:50%;background:#b8b0a8"></div><div class="a" style="left:30px;top:14px;width:18px;height:24px;border-radius:45% 45% 0 0;background:#333"></div><div class="a" style="left:35px;top:11px;width:8px;height:9px;border-radius:50%;background:#a8a098"></div></div>
 <div class="t" style="left:40px;top:370px;font-family:'Liberation Serif',serif;font-size:5.7px;color:#222">Бұл суреттердің қандай байланысы көріп тұрмыз?</div>
 <!-- gallery panel -->
 <div class="a" style="left:509px;top:270px;width:192px;height:125px;background:linear-gradient(90deg,#fbfaf4,#fdfcf7 60%,#f8f6ee)"></div>
 <div class="t" style="left:540px;top:272px;font-family:'Liberation Serif',serif;font-weight:bold;font-size:10.5px;color:#111">«Галереяны&nbsp; шарлау»&nbsp; әдісі</div>
 <div class="a" style="left:513px;top:289px;width:182px;height:4px;background:repeating-linear-gradient(90deg,#fff 0 4px,#9aa8b0 4px 7px,#d8dde0 7px 22px,#fff 22px 28px)"></div>
 <div class="a" style="left:514px;top:294px;width:180px;height:4px;background:linear-gradient(90deg,#f6ecd8 0 10%,#efd9a8 10% 45%,#f6ecd8 45% 60%,#efd9a8 60% 100%)"></div>
 <div class="a" style="left:517px;top:300px;width:40px;height:2px;background:#d8d4cc"></div>
 <div class="a" style="left:515px;top:306px;width:176px;height:84px;background:#fcedbf"></div>
 <div class="a" style="left:543px;top:311px;width:31px;height:23px;background:#fff;box-shadow:0 1px 2px rgba(0,0,0,.25)"></div><div class="a" style="left:545px;top:314px;width:27px;height:18px;background:radial-gradient(ellipse,#8a7a50 0%,#2a2418 40%,#111 70%)"></div>
 <div class="a" style="left:572px;top:309px;width:28px;height:20px;background:#fff;box-shadow:0 1px 2px rgba(0,0,0,.25)"></div><div class="a" style="left:574px;top:312px;width:24px;height:15px;background:radial-gradient(ellipse,#c89a50 0%,#7a5030 50%,#4a3a2a 80%)"></div>
 <div class="a" style="left:616px;top:309px;width:31px;height:22px;background:#fff;box-shadow:0 1px 2px rgba(0,0,0,.25)"></div><div class="a" style="left:618px;top:311px;width:27px;height:18px;background:linear-gradient(#8a96b0,#4a5a7a 60%,#6a7088)"></div>
 <div class="a" style="left:645px;top:310px;width:31px;height:23px;background:#fff;box-shadow:0 1px 2px rgba(0,0,0,.25)"></div><div class="a" style="left:647.5px;top:312px;width:26.5px;height:18.6px;background:radial-gradient(ellipse,#f0b070 0%,#c06020 45%,#8a4a30 80%)"></div>
 <div class="a" style="left:519px;top:327px;width:33px;height:26px;background:#fff;box-shadow:0 1px 2px rgba(0,0,0,.25)"></div><div class="a" style="left:521px;top:329.7px;width:29px;height:21px;background:linear-gradient(90deg,#8a5a60,#c87a80 50%,#e0c0c8)"></div>
 <div class="a" style="left:565px;top:329px;width:33px;height:26px;background:#fff;box-shadow:0 1px 2px rgba(0,0,0,.25)"></div>
 <div class="a" style="left:574px;top:335px;width:6px;height:14px;background:#4a7a56;border-radius:45%"></div><div class="a" style="left:584px;top:335px;width:6px;height:14px;background:#4a7a56;border-radius:45%"></div>
 <div class="a" style="left:595px;top:322px;width:29px;height:22px;background:#fff;box-shadow:0 1px 2px rgba(0,0,0,.25)"></div><div class="a" style="left:597px;top:324px;width:25px;height:18px;background:linear-gradient(#a8b0b8,#3a4048 50%,#9aa0a8)"></div>
 <div class="a" style="left:544px;top:344px;width:30px;height:25px;background:#fff;box-shadow:0 1px 2px rgba(0,0,0,.25)"></div><div class="a" style="left:546px;top:346.6px;width:26px;height:20.4px;background:repeating-linear-gradient(90deg,#6ab8d0 0 3px,#a8d8e8 3px 5px)"></div>
 <div class="a" style="left:596px;top:344px;width:34px;height:24px;background:#fff;box-shadow:0 1px 2px rgba(0,0,0,.25)"></div><div class="a" style="left:598.7px;top:346.6px;width:29px;height:19.4px;background:radial-gradient(ellipse,#3a3a3a 0%,#8a8a60 40%,#c8c8b0 80%)"></div>
 <div class="a" style="left:624px;top:337px;width:28px;height:9.6px;background:#fff;box-shadow:0 1px 1px rgba(0,0,0,.15)"></div>
 <div class="a" style="left:654px;top:339px;width:28px;height:8.5px;background:#fff;box-shadow:0 1px 1px rgba(0,0,0,.15)"></div>
 <div class="a" style="left:629.7px;top:353px;width:28px;height:8.6px;background:#fff;box-shadow:0 1px 1px rgba(0,0,0,.15)"></div>
 <div class="a" style="left:517px;top:359.7px;width:28px;height:8.3px;background:#fff;box-shadow:0 1px 1px rgba(0,0,0,.15)"></div>
 <div class="a" style="left:574px;top:359.7px;width:21px;height:8.3px;background:#fff;box-shadow:0 1px 1px rgba(0,0,0,.15)"></div>
 <div class="a" style="left:528px;top:374.8px;width:30px;height:8.2px;background:#fff;box-shadow:0 1px 1px rgba(0,0,0,.15)"></div>
 <div class="a" style="left:559px;top:374.8px;width:28px;height:8.2px;background:#fff;box-shadow:0 1px 1px rgba(0,0,0,.15)"></div>
 <div class="a" style="left:622px;top:370px;width:29px;height:8.5px;background:#fff;box-shadow:0 1px 1px rgba(0,0,0,.15)"></div>
 <div class="a" style="left:588px;top:363.5px;width:28px;height:26px;background:#f4c0a0;border-radius:45% 45% 35% 35%;opacity:.85"></div>
 <div class="a" style="left:677.5px;top:378.5px;width:10.5px;height:10.5px;border-radius:50%;background:#3a80c8"></div>
<div class="a" style="left:4px;top:0px;width:199px;height:124px;background:radial-gradient(ellipse at 25% 60%,#5a7a30 0,#6a8a40 20%,transparent 35%),linear-gradient(#111 0%,#222 14%,#a0a49c 16%,#b0b4ac 50%,#8a8e86 100%)"></div><div class="a" style="left:4px;top:270px;width:199px;height:125px;background:linear-gradient(90deg,#e8e8e8 0%,#3a3a3a 20%,#cccccc 45%,#2a2a2a 65%,#dddddd 100%)"></div><div class="a" style="left:507px;top:0px;width:195px;height:124px;background:linear-gradient(#e0e0e8 0%,#f0f0f4 40%,#e8e0b0 60%,#d8d8e0 100%)"></div><div class="a" style="left:509px;top:270px;width:192px;height:125px;background:linear-gradient(#1a1a1a 0%,#2a2a2a 20%,#e8e8f0 25%,#f0f0f4 80%,#1a1a1a 100%)"></div></div></div>
<div class="a" style="left:127px;top:378px;width:137px;height:77px;overflow:hidden;box-shadow:0 0 1px rgba(0,0,0,.35)"><div class="a" style="left:0;top:0;width:702px;height:395px;transform:scale(0.19516);transform-origin:0 0;background:linear-gradient(90deg,#e8e9ef 0%,#eff0f4 25%,#f9f9fb 40%,#fdfdfe 55%,#f6f6f8 72%,#ecedf1 100%)">
 <div class="a" style="left:0;top:0;width:4px;height:395px;background:#f6f6f8"></div>
 <!-- left task panel -->
 <div class="a" style="left:4px;top:0;width:199px;height:124px;background:#fff"></div>
 <div class="a" style="left:4px;top:0;width:199px;height:19px;background:#4fcfd5"></div>
 <div class="a" style="left:34px;top:2px;width:14px;height:15px;border-radius:4px;background:linear-gradient(135deg,#a45cb0,#6a2c84)"></div>
 <div class="a" style="left:37px;top:5px;width:4px;height:9px;background:#f0d8f0;border-radius:1px"></div>
 <div class="a" style="left:42px;top:6px;width:4px;height:8px;background:#fff;border-radius:1px"></div>
 <div class="t" style="left:54px;top:7px;font-size:5.8px;color:#f4fbfb">ШЫҒАРМАШЫЛЫҚ ЖҰМЫС</div>
 <div class="t" style="left:14px;top:23px;font-size:5.5px;color:#222;font-weight:bold">Тапсырма</div>
 <div class="t" style="left:15px;top:31px;font-size:5.5px;color:#222">«Қазақстанның қандай жерлерін әлемнің жеті кереметіне қосар едің?»</div>
 <div class="t" style="left:14px;top:37px;font-size:5.5px;color:#222">тақырыбында  сурет салу</div>
 <div class="a" style="left:21.2px;top:55.3px;width:33.3px;height:22.4px;background:linear-gradient(#dfe4e6 0%,#8a9a7a 18%,#4a6a3a 50%,#5a7040 100%);overflow:hidden"><div class="a" style="left:16px;top:0px;width:12px;height:8px;background:#b08070;"></div><div class="a" style="left:0px;top:9px;width:33px;height:5px;background:#a89078;transform:rotate(-12deg)"></div><div class="a" style="left:14px;top:12px;width:20px;height:4px;background:#c8b8a0;transform:rotate(35deg)"></div></div>
 <div class="a" style="left:55.7px;top:45.6px;width:35px;height:32px;background:linear-gradient(#e8ecef 0%,#8a9898 12%,#4a5a48 30%,#3a4a2a 60%,#6a7a48 100%);overflow:hidden"><div class="a" style="left:12px;top:2px;width:14px;height:16px;background:#2a3a22;border-radius:50% 50% 10% 10%"></div><div class="a" style="left:0px;top:18px;width:18px;height:14px;background:repeating-linear-gradient(60deg,#c8c8a0 0 2px,#4a5a30 2px 5px);"></div></div>
 <div class="a" style="left:93.3px;top:45.6px;width:34.5px;height:32px;background:linear-gradient(#2e5cc0 0%,#5a80c0 25%,#7a8aa0 45%,#4a5060 70%,#1a1a22 85%,#c8c8d0 100%);overflow:hidden"><div class="a" style="left:15px;top:3px;width:5px;height:23px;background:#c8ccd4;"></div><div class="a" style="left:11px;top:8px;width:13px;height:2px;background:#c0c4cc;"></div><div class="a" style="left:22px;top:14px;width:12px;height:10px;background:rgba(230,230,235,.6);border-radius:40%"></div></div>
 <div class="a" style="left:130.2px;top:45.6px;width:34.5px;height:32px;background:linear-gradient(90deg,#6a3020 0%,#b86a48 20%,#8a4a30 40%,#c87a58 60%,#9a5a3a 80%,#6a3a28 100%);overflow:hidden"><div class="a" style="left:8px;top:8px;width:18px;height:6px;background:rgba(60,30,20,.5);"></div><div class="a" style="left:6px;top:20px;width:22px;height:3px;background:rgba(230,160,120,.5);"></div></div>
 <div class="a" style="left:21.2px;top:80.1px;width:46px;height:35.1px;background:linear-gradient(#141c40 0%,#2a3a6a 22%,#8a5a30 35%,#f0a050 55%,#c06a28 70%,#3a4a7a 85%,#8aa0c8 100%);overflow:hidden"><div class="a" style="left:0px;top:17px;width:46px;height:3px;background:repeating-linear-gradient(90deg,#fbd080 0 3px,#6a3a20 3px 6px);"></div><div class="a" style="left:0px;top:23px;width:46px;height:3px;background:repeating-linear-gradient(90deg,#fbd080 0 3px,#6a3a20 3px 6px);"></div></div>
 <div class="a" style="left:69px;top:80.1px;width:46.7px;height:35.1px;background:linear-gradient(#7aa0d8 0%,#b8cce8 30%,#e8e0c8 60%,#5a5a50 82%,#a0a8b0 100%);overflow:hidden"><div class="a" style="left:16px;top:6px;width:14px;height:10px;background:#e8dcb0;border-radius:50% 50% 0 0"></div><div class="a" style="left:11px;top:14px;width:24px;height:14px;background:#e8d8a8;"></div><div class="a" style="left:5px;top:4px;width:2px;height:24px;background:#6a6050;"></div><div class="a" style="left:39px;top:4px;width:2px;height:24px;background:#6a6050;"></div><div class="a" style="left:19px;top:29px;width:8px;height:6px;background:#c8d0d8;"></div></div>
 <div class="a" style="left:117.5px;top:80.1px;width:47.2px;height:35.1px;background:linear-gradient(#a8c4e4 0%,#c0d0e0 30%,#8a8a70 65%,#4a4a48 100%);overflow:hidden"><div class="a" style="left:6px;top:4px;width:0;height:0;border-left:18px solid transparent;border-right:18px solid transparent;border-bottom:19px solid #e4dccc"></div><div class="a" style="left:4px;top:23px;width:40px;height:12px;background:linear-gradient(#5a5a58,#3a3a40);"></div></div>
 <div class="a" style="left:4px;top:117px;width:199px;height:6px;background:#52c6cc"></div>
 <!-- right desk photo -->
 <div class="a" style="left:507px;top:0;width:195px;height:124px;background:repeating-linear-gradient(90deg,#e6e6ea 0 14px,#cfcfd4 14px 15px),linear-gradient(90deg,#d8d8dc,#ececef)"></div>
 <div class="a" style="left:507px;top:101px;width:195px;height:23px;background:linear-gradient(#c8c8cc 0,#eeeef0 12%,#f2f2f4 60%,#dcdce0 100%)"></div>
 <div class="a" style="left:519px;top:17px;width:117px;height:71px;background:#111;border-radius:2px"></div>
 <div class="a" style="left:521px;top:19px;width:113px;height:66px;background:#fdfdfd"></div>
 <div class="a" style="left:519px;top:88px;width:117px;height:12px;background:linear-gradient(#e8e8ea,#cfcfd3);border-radius:0 0 2px 2px"></div>
 <div class="a" style="left:566px;top:100px;width:24px;height:8px;background:linear-gradient(#b8b8bc,#d8d8dc)"></div>
 <div class="t" style="left:524px;top:27px;font-size:4.8px;color:#222;font-family:'Liberation Serif',serif">Тақырыбы:  <b style="font-size:5.5px">«Электронды кесте.</b></div>
 <div class="t" style="left:548px;top:34px;font-size:5.5px;color:#222;font-family:'Liberation Serif',serif;font-weight:bold">Диаграммалар (charts)»</div>
 <div class="t" style="left:526px;top:42px;font-size:4.2px;color:#333;font-family:'Liberation Serif',serif;line-height:6.5px">Үйренетінім:<br>Excel кестесінің мәліметтерін диаграммалар құрастыру<br>&nbsp;&nbsp;Критерийлер:<br>&nbsp;-диаграмманың түрлері мен типтерін білу<br>&nbsp;- кестенің деректерін графикалық түрде<br>&nbsp;&nbsp;ұсыну (диаграммалар құру) дағды.</div>
 <div class="a" style="left:552px;top:90px;width:15px;height:14px;background:#e8ec70;transform:rotate(-8deg)"></div>
 <div class="a" style="left:612px;top:92px;width:18px;height:18px;border-radius:50%;background:#f4f4f0;border:2px solid #222"></div>
 <div class="a" style="left:561px;top:110px;width:60px;height:10px;background:#f0f0f2;border:1px solid #c8c8cc"></div>
 <div class="a" style="left:645px;top:95px;width:54px;height:20px;background:linear-gradient(#3a6a4a 0%,#2a5a3a 50%,#506a50 70%,#1a3a2a 100%)"></div>
 <div class="a" style="left:646px;top:117px;width:50px;height:5px;background:#7a7a80"></div>
 <div class="a" style="left:657px;top:80px;width:12px;height:15px;background:#d8a860"></div>
 <div class="a" style="left:655px;top:68px;width:16px;height:12px;background:linear-gradient(90deg,#d04040,#e8c040,#40a040,#4060c0)"></div>
 <div class="a" style="left:645px;top:13px;width:52px;height:44px;background:#f2f2f4;border:1px solid #d8d8dc;transform:rotate(-4deg)"></div>
 <div class="a" style="left:659px;top:5px;width:12px;height:14px;background:#e8f060"></div>
 <div class="a" style="left:675px;top:12px;width:12px;height:12px;background:#f8b0e0"></div>
 <div class="a" style="left:639px;top:52px;width:14px;height:14px;background:#f8b0e0"></div>
 <div class="a" style="left:670px;top:59px;width:12px;height:15px;background:#e8f060"></div>
 <div class="a" style="left:509px;top:55px;width:14px;height:14px;border-radius:50%;background:radial-gradient(#a888b8,#705a80 70%,transparent 71%)"></div>
 <div class="a" style="left:512px;top:68px;width:7px;height:48px;background:linear-gradient(90deg,#ccc,#f0f0f0,#bbb);border-radius:2px"></div>
 <!-- center title -->
 <div class="t" style="left:232px;top:14.5px;font-family:'Liberation Serif',serif;font-weight:bold;font-size:14.6px;line-height:1;color:#c72530">Сабақты зерттеуді қалай бастадық?</div>
 <div class="a" style="left:216px;top:45px;width:262px;font-family:'Liberation Serif',serif;font-weight:bold;font-size:11.7px;line-height:13.6px;color:#1f2a5c;text-align:center;white-space:nowrap"><span style="color:#c72530">4-топтың зерттеу сұрағы:</span>«Шығармашылық<br>тапсырмалар арқылы 8 «Б» сынып<br>оқушыларының танымдық белсенділігін қалай<br>дамытуға болады?»</div>
 <!-- bottom center text -->
 <div class="a" style="left:219px;top:305px;width:258px;font-family:'Liberation Serif',serif;font-weight:bold;font-size:14.6px;line-height:17.4px;color:#d0202a;text-align:center">Топ модераторы:информатика<br>пәні мұғалімі<br><span style="color:#1f2a5c">Сағындық А.О</span></div>
 <!-- arrows -->
 <svg class="a" style="left:0;top:0" width="702" height="395" viewBox="0 0 702 395">
  <defs>
   <linearGradient id="gO" gradientUnits="userSpaceOnUse" x1="216" y1="115" x2="381" y2="242"><stop offset="0" stop-color="#fcc36c"/><stop offset=".6" stop-color="#f9ad3a"/><stop offset="1" stop-color="#f79c1a"/></linearGradient>
   <linearGradient id="gP" gradientUnits="userSpaceOnUse" x1="314" y1="156" x2="483" y2="288"><stop offset="0" stop-color="#ef999e"/><stop offset=".5" stop-color="#ec727a"/><stop offset="1" stop-color="#e6434c"/></linearGradient>
   <linearGradient id="gT" gradientUnits="userSpaceOnUse" x1="384" y1="209" x2="482" y2="110"><stop offset="0" stop-color="#3aa0ad"/><stop offset=".5" stop-color="#31b6c6"/><stop offset="1" stop-color="#21cbe4"/></linearGradient>
   <linearGradient id="gU" gradientUnits="userSpaceOnUse" x1="212" y1="289" x2="315" y2="187"><stop offset="0" stop-color="#c394d8"/><stop offset=".5" stop-color="#9a62b8"/><stop offset="1" stop-color="#6e3a8c"/></linearGradient>
   <filter id="sh" x="-20%" y="-20%" width="140%" height="140%"><feGaussianBlur in="SourceAlpha" stdDeviation="5"/><feOffset dx="3" dy="5"/><feComponentTransfer><feFuncA type="linear" slope=".3"/></feComponentTransfer><feMerge><feMergeNode/><feMergeNode in="SourceGraphic"/></feMerge></filter>
  </defs>
  <g filter="url(#sh)" stroke-linejoin="round" stroke-width="10">
   <polygon points="422.0,111.0 481.5,111.0 481.5,169.0 461.9,169.0 423.0,207.9 385.1,170.0 436.1,119.0 422.0,119.0" fill="url(#gT)" stroke="url(#gT)"/>
   <polygon points="213.0,288.0 213.0,232.0 220.0,232.0 220.0,247.1 279.0,188.1 313.4,222.5 255.9,280.0 271.0,280.0 271.0,288.0" fill="url(#gU)" stroke="url(#gU)"/>
   <polygon points="217.0,116.0 273.0,116.0 273.0,124.0 260.9,124.0 377.9,241.0 305.1,241.0 235.1,171.0 217.0,171.0" fill="url(#gO)" stroke="url(#gO)"/>
   <polygon points="317.0,157.5 387.4,157.5 473.0,243.1 473.0,229.0 482.0,229.0 482.0,287.0 422.0,287.0 422.0,280.0 439.0,280.0" fill="url(#gP)" stroke="url(#gP)"/>
   <polygon points="305,152.5 389.5,152.5 412,175 327.5,175" fill="url(#gP)"/>
   <polygon points="390,246 303,246 283,226 370,226" fill="url(#gO)"/>
  </g>
  <polygon points="301,156 308,156 350,198 343,198" fill="#4a2858"/>
  <polygon points="347,202 354,202 398,246 391,246" fill="#1a6a6e"/>
 </svg>
 <div class="t" style="left:272px;top:173px;transform:translate(-50%,-50%) rotate(45deg);font-family:'Liberation Serif',serif;font-weight:bold;font-size:14.6px;color:#111">№1 зерттеу сабағы</div>
 <div class="t" style="left:414.5px;top:222px;transform:translate(-50%,-50%) rotate(45deg);font-family:'Liberation Serif',serif;font-weight:bold;font-size:14.8px;color:#111">№4 зерттеу сабағы</div>
 <div class="t" style="left:449.7px;top:145px;transform:translate(-50%,-50%) rotate(-45deg);font-family:'Liberation Serif',serif;font-weight:bold;font-size:14.6px;line-height:19px;color:#111;text-align:center">№3 зерттеу<br>сабағы</div>
 <div class="t" style="left:249px;top:252px;transform:translate(-50%,-50%) rotate(-45deg);font-family:'Liberation Serif',serif;font-weight:bold;font-size:14.6px;line-height:19px;color:#111;text-align:center">№2 зерттеу<br>сабағы</div>
 <!-- left names -->
 <svg class="a" style="left:3px;top:142px" width="30" height="30" viewBox="0 0 30 30"><g fill="#f6b347"><rect x="12" y="0.5" width="6" height="8" rx="2" transform="rotate(0 15 15)"/><rect x="12" y="0.5" width="6" height="8" rx="2" transform="rotate(45 15 15)"/><rect x="12" y="0.5" width="6" height="8" rx="2" transform="rotate(90 15 15)"/><rect x="12" y="0.5" width="6" height="8" rx="2" transform="rotate(135 15 15)"/><rect x="12" y="0.5" width="6" height="8" rx="2" transform="rotate(180 15 15)"/><rect x="12" y="0.5" width="6" height="8" rx="2" transform="rotate(225 15 15)"/><rect x="12" y="0.5" width="6" height="8" rx="2" transform="rotate(270 15 15)"/><rect x="12" y="0.5" width="6" height="8" rx="2" transform="rotate(315 15 15)"/><circle cx="15" cy="15" r="10.5"/></g><circle cx="15" cy="15" r="5" fill="#eef0f4"/></svg>
 <div class="t" style="left:39px;top:135px;font-family:'Liberation Serif',serif;font-weight:bold;font-size:17.2px;line-height:1;color:#1c2b5a">Қазбек А.С</div>
 <div class="a" style="left:39px;top:155px;font-family:'Liberation Serif',serif;-webkit-text-stroke:.25px;font-size:11.5px;line-height:13.6px;color:#2a3560;white-space:nowrap">Сабақтың тақырыбы: «Мен<br>әлемді сүйемін»</div>
 <svg class="a" style="left:5px;top:220px" width="27" height="28" viewBox="0 0 27 28"><path d="M3 3 H14 L18 7 M21 15 V25 H3 V3" fill="none" stroke="#7b4a8c" stroke-width="3"/><path d="M9 21 L10 16 L21 5 L25 9 L14 20 Z" fill="#7b4a8c"/></svg>
 <div class="t" style="left:35px;top:207.5px;font-family:'Liberation Serif',serif;font-weight:bold;font-size:17.4px;line-height:1;color:#1c2b5a">Сүлейменова Д.Н</div>
 <div class="a" style="left:35px;top:227px;font-family:'Liberation Serif',serif;-webkit-text-stroke:.25px;font-size:11.5px;line-height:14.6px;color:#2a3560;white-space:nowrap">Сабақтың тақырыбы: «Үстел<br>ойындарының тұжырымдамасы»</div>
 <!-- right names -->
 <svg class="a" style="left:496px;top:144px" width="34" height="28" viewBox="0 0 34 28"><rect x="0" y="5" width="34" height="23" rx="2" fill="#19a2b3"/><rect x="11" y="1" width="12" height="6" rx="2" fill="none" stroke="#19a2b3" stroke-width="2.5"/><rect x="4" y="5" width="2" height="23" fill="#eef0f2"/><rect x="28" y="5" width="2" height="23" fill="#eef0f2"/><rect x="14" y="4" width="6" height="2" fill="#eef0f2"/></svg>
 <div class="t" style="left:533px;top:132px;font-family:'Liberation Serif',serif;font-weight:bold;font-size:17.4px;line-height:1;color:#1c2b5a">Сағындық А.О</div>
 <div class="a" style="left:533px;top:152px;font-family:'Liberation Serif',serif;-webkit-text-stroke:.25px;font-size:11.5px;line-height:14px;color:#2a3560;white-space:nowrap">Сабақтың&nbsp; тақырыбы:<br>«Электронды&nbsp; кесте.<br>Диаграммалар&nbsp; (charts)»</div>
 <svg class="a" style="left:500px;top:213px" width="29" height="32" viewBox="0 0 29 32"><path d="M2 2 H27 V20 L19 30 H2 Z" fill="none" stroke="#e0686e" stroke-width="3"/><path d="M27 20 L19 30 V22 Z" fill="#e0686e"/><line x1="7" y1="10" x2="22" y2="10" stroke="#e0686e" stroke-width="2.5"/><line x1="7" y1="15" x2="22" y2="15" stroke="#e0686e" stroke-width="2.5"/><line x1="7" y1="20" x2="15" y2="20" stroke="#e0686e" stroke-width="2.5"/></svg>
 <div class="t" style="left:529px;top:201px;font-family:'Liberation Serif',serif;font-weight:bold;font-size:17.2px;line-height:1;color:#1c2b5a">Байсүйеуова Г.Б</div>
 <div class="a" style="left:529px;top:222px;font-family:'Liberation Serif',serif;-webkit-text-stroke:.25px;font-size:11.5px;line-height:13px;color:#2a3560;white-space:nowrap">Сабақтың тақырыбы: «Қазақтың<br>ұлттық сәндік-&nbsp; қолданбалы<br>бұйымдары»</div>
 <!-- miga panel -->
 <div class="a" style="left:4px;top:270px;width:199px;height:125px;background:linear-gradient(90deg,#e9c48e,#f3dcb0 50%,#e9c48e)"></div>
 <div class="a" style="left:12px;top:279px;width:183px;height:107px;background:#fdfcfa;border:1px solid #e8d0a8;box-shadow:0 0 0 2px #f6ead4"></div>
 <div class="a" style="left:4px;top:328px;width:12px;height:10px;background:#4a3a30"></div>
 <div class="a" style="left:191px;top:328px;width:12px;height:10px;background:#4a3a30"></div>
 <div class="t" style="left:62px;top:281px;font-family:'Liberation Serif',serif;font-size:11.2px;color:#c8202a">«Миға шабуыл»</div>
 <div class="a" style="left:30px;top:295px;width:40px;height:26px;background:linear-gradient(150deg,#3a2820 0%,#8a5a40 40%,#5a3a28 70%,#2a1a10 100%);transform:skew(-10deg,10deg)"></div>
 <div class="a" style="left:79px;top:301px;width:49px;height:34px;background:linear-gradient(135deg,#7a6a5a 0%,#b8a890 35%,#3a8a80 60%,#d8d0c0 100%)"></div>
 <div class="a" style="left:140px;top:291px;width:41px;height:37px;background:linear-gradient(120deg,#d8b898 0%,#a86a40 40%,#6a6a78 70%,#c89070 100%)"></div>
 <div class="a" style="left:22px;top:330px;width:37px;height:37px;background:linear-gradient(160deg,#8a5a30 0%,#c89058 35%,#6a4a20 65%,#b88050 100%)"></div>
 <div class="a" style="left:64px;top:334px;width:32px;height:33px;background:#f4f2f0;overflow:hidden"><div class="a" style="left:9px;top:4px;width:16px;height:20px;border-radius:50%;background:#2a1a18"></div><div class="a" style="left:11px;top:8px;width:12px;height:15px;border-radius:45%;background:#e8c4a8"></div><div class="a" style="left:4px;top:24px;width:28px;height:14px;border-radius:40% 40% 0 0;background:#3a1a20"></div></div>
 <div class="a" style="left:113px;top:330px;width:52px;height:37px;background:linear-gradient(#ddd,#bbb);overflow:hidden"><div class="a" style="left:0;top:0;width:52px;height:16px;background:repeating-linear-gradient(90deg,#222 0 6px,#e8e8e8 6px 12px)"></div><div class="a" style="left:4px;top:12px;width:16px;height:26px;border-radius:45% 45% 0 0;background:#2a2a2a"></div><div class="a" style="left:8px;top:9px;width:8px;height:9px;border-radius:50%;background:#b8b0a8"></div><div class="a" style="left:30px;top:14px;width:18px;height:24px;border-radius:45% 45% 0 0;background:#333"></div><div class="a" style="left:35px;top:11px;width:8px;height:9px;border-radius:50%;background:#a8a098"></div></div>
 <div class="t" style="left:40px;top:370px;font-family:'Liberation Serif',serif;font-size:5.7px;color:#222">Бұл суреттердің қандай байланысы көріп тұрмыз?</div>
 <!-- gallery panel -->
 <div class="a" style="left:509px;top:270px;width:192px;height:125px;background:linear-gradient(90deg,#fbfaf4,#fdfcf7 60%,#f8f6ee)"></div>
 <div class="t" style="left:540px;top:272px;font-family:'Liberation Serif',serif;font-weight:bold;font-size:10.5px;color:#111">«Галереяны&nbsp; шарлау»&nbsp; әдісі</div>
 <div class="a" style="left:513px;top:289px;width:182px;height:4px;background:repeating-linear-gradient(90deg,#fff 0 4px,#9aa8b0 4px 7px,#d8dde0 7px 22px,#fff 22px 28px)"></div>
 <div class="a" style="left:514px;top:294px;width:180px;height:4px;background:linear-gradient(90deg,#f6ecd8 0 10%,#efd9a8 10% 45%,#f6ecd8 45% 60%,#efd9a8 60% 100%)"></div>
 <div class="a" style="left:517px;top:300px;width:40px;height:2px;background:#d8d4cc"></div>
 <div class="a" style="left:515px;top:306px;width:176px;height:84px;background:#fcedbf"></div>
 <div class="a" style="left:543px;top:311px;width:31px;height:23px;background:#fff;box-shadow:0 1px 2px rgba(0,0,0,.25)"></div><div class="a" style="left:545px;top:314px;width:27px;height:18px;background:radial-gradient(ellipse,#8a7a50 0%,#2a2418 40%,#111 70%)"></div>
 <div class="a" style="left:572px;top:309px;width:28px;height:20px;background:#fff;box-shadow:0 1px 2px rgba(0,0,0,.25)"></div><div class="a" style="left:574px;top:312px;width:24px;height:15px;background:radial-gradient(ellipse,#c89a50 0%,#7a5030 50%,#4a3a2a 80%)"></div>
 <div class="a" style="left:616px;top:309px;width:31px;height:22px;background:#fff;box-shadow:0 1px 2px rgba(0,0,0,.25)"></div><div class="a" style="left:618px;top:311px;width:27px;height:18px;background:linear-gradient(#8a96b0,#4a5a7a 60%,#6a7088)"></div>
 <div class="a" style="left:645px;top:310px;width:31px;height:23px;background:#fff;box-shadow:0 1px 2px rgba(0,0,0,.25)"></div><div class="a" style="left:647.5px;top:312px;width:26.5px;height:18.6px;background:radial-gradient(ellipse,#f0b070 0%,#c06020 45%,#8a4a30 80%)"></div>
 <div class="a" style="left:519px;top:327px;width:33px;height:26px;background:#fff;box-shadow:0 1px 2px rgba(0,0,0,.25)"></div><div class="a" style="left:521px;top:329.7px;width:29px;height:21px;background:linear-gradient(90deg,#8a5a60,#c87a80 50%,#e0c0c8)"></div>
 <div class="a" style="left:565px;top:329px;width:33px;height:26px;background:#fff;box-shadow:0 1px 2px rgba(0,0,0,.25)"></div>
 <div class="a" style="left:574px;top:335px;width:6px;height:14px;background:#4a7a56;border-radius:45%"></div><div class="a" style="left:584px;top:335px;width:6px;height:14px;background:#4a7a56;border-radius:45%"></div>
 <div class="a" style="left:595px;top:322px;width:29px;height:22px;background:#fff;box-shadow:0 1px 2px rgba(0,0,0,.25)"></div><div class="a" style="left:597px;top:324px;width:25px;height:18px;background:linear-gradient(#a8b0b8,#3a4048 50%,#9aa0a8)"></div>
 <div class="a" style="left:544px;top:344px;width:30px;height:25px;background:#fff;box-shadow:0 1px 2px rgba(0,0,0,.25)"></div><div class="a" style="left:546px;top:346.6px;width:26px;height:20.4px;background:repeating-linear-gradient(90deg,#6ab8d0 0 3px,#a8d8e8 3px 5px)"></div>
 <div class="a" style="left:596px;top:344px;width:34px;height:24px;background:#fff;box-shadow:0 1px 2px rgba(0,0,0,.25)"></div><div class="a" style="left:598.7px;top:346.6px;width:29px;height:19.4px;background:radial-gradient(ellipse,#3a3a3a 0%,#8a8a60 40%,#c8c8b0 80%)"></div>
 <div class="a" style="left:624px;top:337px;width:28px;height:9.6px;background:#fff;box-shadow:0 1px 1px rgba(0,0,0,.15)"></div>
 <div class="a" style="left:654px;top:339px;width:28px;height:8.5px;background:#fff;box-shadow:0 1px 1px rgba(0,0,0,.15)"></div>
 <div class="a" style="left:629.7px;top:353px;width:28px;height:8.6px;background:#fff;box-shadow:0 1px 1px rgba(0,0,0,.15)"></div>
 <div class="a" style="left:517px;top:359.7px;width:28px;height:8.3px;background:#fff;box-shadow:0 1px 1px rgba(0,0,0,.15)"></div>
 <div class="a" style="left:574px;top:359.7px;width:21px;height:8.3px;background:#fff;box-shadow:0 1px 1px rgba(0,0,0,.15)"></div>
 <div class="a" style="left:528px;top:374.8px;width:30px;height:8.2px;background:#fff;box-shadow:0 1px 1px rgba(0,0,0,.15)"></div>
 <div class="a" style="left:559px;top:374.8px;width:28px;height:8.2px;background:#fff;box-shadow:0 1px 1px rgba(0,0,0,.15)"></div>
 <div class="a" style="left:622px;top:370px;width:29px;height:8.5px;background:#fff;box-shadow:0 1px 1px rgba(0,0,0,.15)"></div>
 <div class="a" style="left:588px;top:363.5px;width:28px;height:26px;background:#f4c0a0;border-radius:45% 45% 35% 35%;opacity:.85"></div>
 <div class="a" style="left:677.5px;top:378.5px;width:10.5px;height:10.5px;border-radius:50%;background:#3a80c8"></div>
<div class="a" style="left:4px;top:0px;width:199px;height:124px;background:linear-gradient(#c8ccd8 0%,#a0b0c8 40%,#d8dce8 70%,#b8bcc8 100%)"></div><div class="a" style="left:4px;top:270px;width:199px;height:125px;background:linear-gradient(#4a2a8a 0%,#5a3a9a 50%,#3a2a7a 100%)"></div><div class="a" style="left:507px;top:0px;width:195px;height:124px;background:linear-gradient(#222 0%,#c04080 30%,#e080b0 60%,#333 100%)"></div><div class="a" style="left:509px;top:270px;width:192px;height:125px;background:linear-gradient(90deg,#8a7060 0%,#c0a090 50%,#6a5a50 100%)"></div></div></div>
<div class="a" style="left:127px;top:465px;width:137px;height:77px;overflow:hidden;box-shadow:0 0 1px rgba(0,0,0,.35)"><div class="a" style="left:0;top:0;width:702px;height:395px;transform:scale(0.19516);transform-origin:0 0;background:linear-gradient(90deg,#e8e9ef 0%,#eff0f4 25%,#f9f9fb 40%,#fdfdfe 55%,#f6f6f8 72%,#ecedf1 100%)">
 <div class="a" style="left:0;top:0;width:4px;height:395px;background:#f6f6f8"></div>
 <!-- left task panel -->
 <div class="a" style="left:4px;top:0;width:199px;height:124px;background:#fff"></div>
 <div class="a" style="left:4px;top:0;width:199px;height:19px;background:#4fcfd5"></div>
 <div class="a" style="left:34px;top:2px;width:14px;height:15px;border-radius:4px;background:linear-gradient(135deg,#a45cb0,#6a2c84)"></div>
 <div class="a" style="left:37px;top:5px;width:4px;height:9px;background:#f0d8f0;border-radius:1px"></div>
 <div class="a" style="left:42px;top:6px;width:4px;height:8px;background:#fff;border-radius:1px"></div>
 <div class="t" style="left:54px;top:7px;font-size:5.8px;color:#f4fbfb">ШЫҒАРМАШЫЛЫҚ ЖҰМЫС</div>
 <div class="t" style="left:14px;top:23px;font-size:5.5px;color:#222;font-weight:bold">Тапсырма</div>
 <div class="t" style="left:15px;top:31px;font-size:5.5px;color:#222">«Қазақстанның қандай жерлерін әлемнің жеті кереметіне қосар едің?»</div>
 <div class="t" style="left:14px;top:37px;font-size:5.5px;color:#222">тақырыбында  сурет салу</div>
 <div class="a" style="left:21.2px;top:55.3px;width:33.3px;height:22.4px;background:linear-gradient(#dfe4e6 0%,#8a9a7a 18%,#4a6a3a 50%,#5a7040 100%);overflow:hidden"><div class="a" style="left:16px;top:0px;width:12px;height:8px;background:#b08070;"></div><div class="a" style="left:0px;top:9px;width:33px;height:5px;background:#a89078;transform:rotate(-12deg)"></div><div class="a" style="left:14px;top:12px;width:20px;height:4px;background:#c8b8a0;transform:rotate(35deg)"></div></div>
 <div class="a" style="left:55.7px;top:45.6px;width:35px;height:32px;background:linear-gradient(#e8ecef 0%,#8a9898 12%,#4a5a48 30%,#3a4a2a 60%,#6a7a48 100%);overflow:hidden"><div class="a" style="left:12px;top:2px;width:14px;height:16px;background:#2a3a22;border-radius:50% 50% 10% 10%"></div><div class="a" style="left:0px;top:18px;width:18px;height:14px;background:repeating-linear-gradient(60deg,#c8c8a0 0 2px,#4a5a30 2px 5px);"></div></div>
 <div class="a" style="left:93.3px;top:45.6px;width:34.5px;height:32px;background:linear-gradient(#2e5cc0 0%,#5a80c0 25%,#7a8aa0 45%,#4a5060 70%,#1a1a22 85%,#c8c8d0 100%);overflow:hidden"><div class="a" style="left:15px;top:3px;width:5px;height:23px;background:#c8ccd4;"></div><div class="a" style="left:11px;top:8px;width:13px;height:2px;background:#c0c4cc;"></div><div class="a" style="left:22px;top:14px;width:12px;height:10px;background:rgba(230,230,235,.6);border-radius:40%"></div></div>
 <div class="a" style="left:130.2px;top:45.6px;width:34.5px;height:32px;background:linear-gradient(90deg,#6a3020 0%,#b86a48 20%,#8a4a30 40%,#c87a58 60%,#9a5a3a 80%,#6a3a28 100%);overflow:hidden"><div class="a" style="left:8px;top:8px;width:18px;height:6px;background:rgba(60,30,20,.5);"></div><div class="a" style="left:6px;top:20px;width:22px;height:3px;background:rgba(230,160,120,.5);"></div></div>
 <div class="a" style="left:21.2px;top:80.1px;width:46px;height:35.1px;background:linear-gradient(#141c40 0%,#2a3a6a 22%,#8a5a30 35%,#f0a050 55%,#c06a28 70%,#3a4a7a 85%,#8aa0c8 100%);overflow:hidden"><div class="a" style="left:0px;top:17px;width:46px;height:3px;background:repeating-linear-gradient(90deg,#fbd080 0 3px,#6a3a20 3px 6px);"></div><div class="a" style="left:0px;top:23px;width:46px;height:3px;background:repeating-linear-gradient(90deg,#fbd080 0 3px,#6a3a20 3px 6px);"></div></div>
 <div class="a" style="left:69px;top:80.1px;width:46.7px;height:35.1px;background:linear-gradient(#7aa0d8 0%,#b8cce8 30%,#e8e0c8 60%,#5a5a50 82%,#a0a8b0 100%);overflow:hidden"><div class="a" style="left:16px;top:6px;width:14px;height:10px;background:#e8dcb0;border-radius:50% 50% 0 0"></div><div class="a" style="left:11px;top:14px;width:24px;height:14px;background:#e8d8a8;"></div><div class="a" style="left:5px;top:4px;width:2px;height:24px;background:#6a6050;"></div><div class="a" style="left:39px;top:4px;width:2px;height:24px;background:#6a6050;"></div><div class="a" style="left:19px;top:29px;width:8px;height:6px;background:#c8d0d8;"></div></div>
 <div class="a" style="left:117.5px;top:80.1px;width:47.2px;height:35.1px;background:linear-gradient(#a8c4e4 0%,#c0d0e0 30%,#8a8a70 65%,#4a4a48 100%);overflow:hidden"><div class="a" style="left:6px;top:4px;width:0;height:0;border-left:18px solid transparent;border-right:18px solid transparent;border-bottom:19px solid #e4dccc"></div><div class="a" style="left:4px;top:23px;width:40px;height:12px;background:linear-gradient(#5a5a58,#3a3a40);"></div></div>
 <div class="a" style="left:4px;top:117px;width:199px;height:6px;background:#52c6cc"></div>
 <!-- right desk photo -->
 <div class="a" style="left:507px;top:0;width:195px;height:124px;background:repeating-linear-gradient(90deg,#e6e6ea 0 14px,#cfcfd4 14px 15px),linear-gradient(90deg,#d8d8dc,#ececef)"></div>
 <div class="a" style="left:507px;top:101px;width:195px;height:23px;background:linear-gradient(#c8c8cc 0,#eeeef0 12%,#f2f2f4 60%,#dcdce0 100%)"></div>
 <div class="a" style="left:519px;top:17px;width:117px;height:71px;background:#111;border-radius:2px"></div>
 <div class="a" style="left:521px;top:19px;width:113px;height:66px;background:#fdfdfd"></div>
 <div class="a" style="left:519px;top:88px;width:117px;height:12px;background:linear-gradient(#e8e8ea,#cfcfd3);border-radius:0 0 2px 2px"></div>
 <div class="a" style="left:566px;top:100px;width:24px;height:8px;background:linear-gradient(#b8b8bc,#d8d8dc)"></div>
 <div class="t" style="left:524px;top:27px;font-size:4.8px;color:#222;font-family:'Liberation Serif',serif">Тақырыбы:  <b style="font-size:5.5px">«Электронды кесте.</b></div>
 <div class="t" style="left:548px;top:34px;font-size:5.5px;color:#222;font-family:'Liberation Serif',serif;font-weight:bold">Диаграммалар (charts)»</div>
 <div class="t" style="left:526px;top:42px;font-size:4.2px;color:#333;font-family:'Liberation Serif',serif;line-height:6.5px">Үйренетінім:<br>Excel кестесінің мәліметтерін диаграммалар құрастыру<br>&nbsp;&nbsp;Критерийлер:<br>&nbsp;-диаграмманың түрлері мен типтерін білу<br>&nbsp;- кестенің деректерін графикалық түрде<br>&nbsp;&nbsp;ұсыну (диаграммалар құру) дағды.</div>
 <div class="a" style="left:552px;top:90px;width:15px;height:14px;background:#e8ec70;transform:rotate(-8deg)"></div>
 <div class="a" style="left:612px;top:92px;width:18px;height:18px;border-radius:50%;background:#f4f4f0;border:2px solid #222"></div>
 <div class="a" style="left:561px;top:110px;width:60px;height:10px;background:#f0f0f2;border:1px solid #c8c8cc"></div>
 <div class="a" style="left:645px;top:95px;width:54px;height:20px;background:linear-gradient(#3a6a4a 0%,#2a5a3a 50%,#506a50 70%,#1a3a2a 100%)"></div>
 <div class="a" style="left:646px;top:117px;width:50px;height:5px;background:#7a7a80"></div>
 <div class="a" style="left:657px;top:80px;width:12px;height:15px;background:#d8a860"></div>
 <div class="a" style="left:655px;top:68px;width:16px;height:12px;background:linear-gradient(90deg,#d04040,#e8c040,#40a040,#4060c0)"></div>
 <div class="a" style="left:645px;top:13px;width:52px;height:44px;background:#f2f2f4;border:1px solid #d8d8dc;transform:rotate(-4deg)"></div>
 <div class="a" style="left:659px;top:5px;width:12px;height:14px;background:#e8f060"></div>
 <div class="a" style="left:675px;top:12px;width:12px;height:12px;background:#f8b0e0"></div>
 <div class="a" style="left:639px;top:52px;width:14px;height:14px;background:#f8b0e0"></div>
 <div class="a" style="left:670px;top:59px;width:12px;height:15px;background:#e8f060"></div>
 <div class="a" style="left:509px;top:55px;width:14px;height:14px;border-radius:50%;background:radial-gradient(#a888b8,#705a80 70%,transparent 71%)"></div>
 <div class="a" style="left:512px;top:68px;width:7px;height:48px;background:linear-gradient(90deg,#ccc,#f0f0f0,#bbb);border-radius:2px"></div>
 <!-- center title -->
 <div class="t" style="left:232px;top:14.5px;font-family:'Liberation Serif',serif;font-weight:bold;font-size:14.6px;line-height:1;color:#c72530">Сабақты зерттеуді қалай бастадық?</div>
 <div class="a" style="left:216px;top:45px;width:262px;font-family:'Liberation Serif',serif;font-weight:bold;font-size:11.7px;line-height:13.6px;color:#1f2a5c;text-align:center;white-space:nowrap"><span style="color:#c72530">4-топтың зерттеу сұрағы:</span>«Шығармашылық<br>тапсырмалар арқылы 8 «Б» сынып<br>оқушыларының танымдық белсенділігін қалай<br>дамытуға болады?»</div>
 <!-- bottom center text -->
 <div class="a" style="left:219px;top:305px;width:258px;font-family:'Liberation Serif',serif;font-weight:bold;font-size:14.6px;line-height:17.4px;color:#d0202a;text-align:center">Топ модераторы:информатика<br>пәні мұғалімі<br><span style="color:#1f2a5c">Сағындық А.О</span></div>
 <!-- arrows -->
 <svg class="a" style="left:0;top:0" width="702" height="395" viewBox="0 0 702 395">
  <defs>
   <linearGradient id="gO" gradientUnits="userSpaceOnUse" x1="216" y1="115" x2="381" y2="242"><stop offset="0" stop-color="#fcc36c"/><stop offset=".6" stop-color="#f9ad3a"/><stop offset="1" stop-color="#f79c1a"/></linearGradient>
   <linearGradient id="gP" gradientUnits="userSpaceOnUse" x1="314" y1="156" x2="483" y2="288"><stop offset="0" stop-color="#ef999e"/><stop offset=".5" stop-color="#ec727a"/><stop offset="1" stop-color="#e6434c"/></linearGradient>
   <linearGradient id="gT" gradientUnits="userSpaceOnUse" x1="384" y1="209" x2="482" y2="110"><stop offset="0" stop-color="#3aa0ad"/><stop offset=".5" stop-color="#31b6c6"/><stop offset="1" stop-color="#21cbe4"/></linearGradient>
   <linearGradient id="gU" gradientUnits="userSpaceOnUse" x1="212" y1="289" x2="315" y2="187"><stop offset="0" stop-color="#c394d8"/><stop offset=".5" stop-color="#9a62b8"/><stop offset="1" stop-color="#6e3a8c"/></linearGradient>
   <filter id="sh" x="-20%" y="-20%" width="140%" height="140%"><feGaussianBlur in="SourceAlpha" stdDeviation="5"/><feOffset dx="3" dy="5"/><feComponentTransfer><feFuncA type="linear" slope=".3"/></feComponentTransfer><feMerge><feMergeNode/><feMergeNode in="SourceGraphic"/></feMerge></filter>
  </defs>
  <g filter="url(#sh)" stroke-linejoin="round" stroke-width="10">
   <polygon points="422.0,111.0 481.5,111.0 481.5,169.0 461.9,169.0 423.0,207.9 385.1,170.0 436.1,119.0 422.0,119.0" fill="url(#gT)" stroke="url(#gT)"/>
   <polygon points="213.0,288.0 213.0,232.0 220.0,232.0 220.0,247.1 279.0,188.1 313.4,222.5 255.9,280.0 271.0,280.0 271.0,288.0" fill="url(#gU)" stroke="url(#gU)"/>
   <polygon points="217.0,116.0 273.0,116.0 273.0,124.0 260.9,124.0 377.9,241.0 305.1,241.0 235.1,171.0 217.0,171.0" fill="url(#gO)" stroke="url(#gO)"/>
   <polygon points="317.0,157.5 387.4,157.5 473.0,243.1 473.0,229.0 482.0,229.0 482.0,287.0 422.0,287.0 422.0,280.0 439.0,280.0" fill="url(#gP)" stroke="url(#gP)"/>
   <polygon points="305,152.5 389.5,152.5 412,175 327.5,175" fill="url(#gP)"/>
   <polygon points="390,246 303,246 283,226 370,226" fill="url(#gO)"/>
  </g>
  <polygon points="301,156 308,156 350,198 343,198" fill="#4a2858"/>
  <polygon points="347,202 354,202 398,246 391,246" fill="#1a6a6e"/>
 </svg>
 <div class="t" style="left:272px;top:173px;transform:translate(-50%,-50%) rotate(45deg);font-family:'Liberation Serif',serif;font-weight:bold;font-size:14.6px;color:#111">№1 зерттеу сабағы</div>
 <div class="t" style="left:414.5px;top:222px;transform:translate(-50%,-50%) rotate(45deg);font-family:'Liberation Serif',serif;font-weight:bold;font-size:14.8px;color:#111">№4 зерттеу сабағы</div>
 <div class="t" style="left:449.7px;top:145px;transform:translate(-50%,-50%) rotate(-45deg);font-family:'Liberation Serif',serif;font-weight:bold;font-size:14.6px;line-height:19px;color:#111;text-align:center">№3 зерттеу<br>сабағы</div>
 <div class="t" style="left:249px;top:252px;transform:translate(-50%,-50%) rotate(-45deg);font-family:'Liberation Serif',serif;font-weight:bold;font-size:14.6px;line-height:19px;color:#111;text-align:center">№2 зерттеу<br>сабағы</div>
 <!-- left names -->
 <svg class="a" style="left:3px;top:142px" width="30" height="30" viewBox="0 0 30 30"><g fill="#f6b347"><rect x="12" y="0.5" width="6" height="8" rx="2" transform="rotate(0 15 15)"/><rect x="12" y="0.5" width="6" height="8" rx="2" transform="rotate(45 15 15)"/><rect x="12" y="0.5" width="6" height="8" rx="2" transform="rotate(90 15 15)"/><rect x="12" y="0.5" width="6" height="8" rx="2" transform="rotate(135 15 15)"/><rect x="12" y="0.5" width="6" height="8" rx="2" transform="rotate(180 15 15)"/><rect x="12" y="0.5" width="6" height="8" rx="2" transform="rotate(225 15 15)"/><rect x="12" y="0.5" width="6" height="8" rx="2" transform="rotate(270 15 15)"/><rect x="12" y="0.5" width="6" height="8" rx="2" transform="rotate(315 15 15)"/><circle cx="15" cy="15" r="10.5"/></g><circle cx="15" cy="15" r="5" fill="#eef0f4"/></svg>
 <div class="t" style="left:39px;top:135px;font-family:'Liberation Serif',serif;font-weight:bold;font-size:17.2px;line-height:1;color:#1c2b5a">Қазбек А.С</div>
 <div class="a" style="left:39px;top:155px;font-family:'Liberation Serif',serif;-webkit-text-stroke:.25px;font-size:11.5px;line-height:13.6px;color:#2a3560;white-space:nowrap">Сабақтың тақырыбы: «Мен<br>әлемді сүйемін»</div>
 <svg class="a" style="left:5px;top:220px" width="27" height="28" viewBox="0 0 27 28"><path d="M3 3 H14 L18 7 M21 15 V25 H3 V3" fill="none" stroke="#7b4a8c" stroke-width="3"/><path d="M9 21 L10 16 L21 5 L25 9 L14 20 Z" fill="#7b4a8c"/></svg>
 <div class="t" style="left:35px;top:207.5px;font-family:'Liberation Serif',serif;font-weight:bold;font-size:17.4px;line-height:1;color:#1c2b5a">Сүлейменова Д.Н</div>
 <div class="a" style="left:35px;top:227px;font-family:'Liberation Serif',serif;-webkit-text-stroke:.25px;font-size:11.5px;line-height:14.6px;color:#2a3560;white-space:nowrap">Сабақтың тақырыбы: «Үстел<br>ойындарының тұжырымдамасы»</div>
 <!-- right names -->
 <svg class="a" style="left:496px;top:144px" width="34" height="28" viewBox="0 0 34 28"><rect x="0" y="5" width="34" height="23" rx="2" fill="#19a2b3"/><rect x="11" y="1" width="12" height="6" rx="2" fill="none" stroke="#19a2b3" stroke-width="2.5"/><rect x="4" y="5" width="2" height="23" fill="#eef0f2"/><rect x="28" y="5" width="2" height="23" fill="#eef0f2"/><rect x="14" y="4" width="6" height="2" fill="#eef0f2"/></svg>
 <div class="t" style="left:533px;top:132px;font-family:'Liberation Serif',serif;font-weight:bold;font-size:17.4px;line-height:1;color:#1c2b5a">Сағындық А.О</div>
 <div class="a" style="left:533px;top:152px;font-family:'Liberation Serif',serif;-webkit-text-stroke:.25px;font-size:11.5px;line-height:14px;color:#2a3560;white-space:nowrap">Сабақтың&nbsp; тақырыбы:<br>«Электронды&nbsp; кесте.<br>Диаграммалар&nbsp; (charts)»</div>
 <svg class="a" style="left:500px;top:213px" width="29" height="32" viewBox="0 0 29 32"><path d="M2 2 H27 V20 L19 30 H2 Z" fill="none" stroke="#e0686e" stroke-width="3"/><path d="M27 20 L19 30 V22 Z" fill="#e0686e"/><line x1="7" y1="10" x2="22" y2="10" stroke="#e0686e" stroke-width="2.5"/><line x1="7" y1="15" x2="22" y2="15" stroke="#e0686e" stroke-width="2.5"/><line x1="7" y1="20" x2="15" y2="20" stroke="#e0686e" stroke-width="2.5"/></svg>
 <div class="t" style="left:529px;top:201px;font-family:'Liberation Serif',serif;font-weight:bold;font-size:17.2px;line-height:1;color:#1c2b5a">Байсүйеуова Г.Б</div>
 <div class="a" style="left:529px;top:222px;font-family:'Liberation Serif',serif;-webkit-text-stroke:.25px;font-size:11.5px;line-height:13px;color:#2a3560;white-space:nowrap">Сабақтың тақырыбы: «Қазақтың<br>ұлттық сәндік-&nbsp; қолданбалы<br>бұйымдары»</div>
 <!-- miga panel -->
 <div class="a" style="left:4px;top:270px;width:199px;height:125px;background:linear-gradient(90deg,#e9c48e,#f3dcb0 50%,#e9c48e)"></div>
 <div class="a" style="left:12px;top:279px;width:183px;height:107px;background:#fdfcfa;border:1px solid #e8d0a8;box-shadow:0 0 0 2px #f6ead4"></div>
 <div class="a" style="left:4px;top:328px;width:12px;height:10px;background:#4a3a30"></div>
 <div class="a" style="left:191px;top:328px;width:12px;height:10px;background:#4a3a30"></div>
 <div class="t" style="left:62px;top:281px;font-family:'Liberation Serif',serif;font-size:11.2px;color:#c8202a">«Миға шабуыл»</div>
 <div class="a" style="left:30px;top:295px;width:40px;height:26px;background:linear-gradient(150deg,#3a2820 0%,#8a5a40 40%,#5a3a28 70%,#2a1a10 100%);transform:skew(-10deg,10deg)"></div>
 <div class="a" style="left:79px;top:301px;width:49px;height:34px;background:linear-gradient(135deg,#7a6a5a 0%,#b8a890 35%,#3a8a80 60%,#d8d0c0 100%)"></div>
 <div class="a" style="left:140px;top:291px;width:41px;height:37px;background:linear-gradient(120deg,#d8b898 0%,#a86a40 40%,#6a6a78 70%,#c89070 100%)"></div>
 <div class="a" style="left:22px;top:330px;width:37px;height:37px;background:linear-gradient(160deg,#8a5a30 0%,#c89058 35%,#6a4a20 65%,#b88050 100%)"></div>
 <div class="a" style="left:64px;top:334px;width:32px;height:33px;background:#f4f2f0;overflow:hidden"><div class="a" style="left:9px;top:4px;width:16px;height:20px;border-radius:50%;background:#2a1a18"></div><div class="a" style="left:11px;top:8px;width:12px;height:15px;border-radius:45%;background:#e8c4a8"></div><div class="a" style="left:4px;top:24px;width:28px;height:14px;border-radius:40% 40% 0 0;background:#3a1a20"></div></div>
 <div class="a" style="left:113px;top:330px;width:52px;height:37px;background:linear-gradient(#ddd,#bbb);overflow:hidden"><div class="a" style="left:0;top:0;width:52px;height:16px;background:repeating-linear-gradient(90deg,#222 0 6px,#e8e8e8 6px 12px)"></div><div class="a" style="left:4px;top:12px;width:16px;height:26px;border-radius:45% 45% 0 0;background:#2a2a2a"></div><div class="a" style="left:8px;top:9px;width:8px;height:9px;border-radius:50%;background:#b8b0a8"></div><div class="a" style="left:30px;top:14px;width:18px;height:24px;border-radius:45% 45% 0 0;background:#333"></div><div class="a" style="left:35px;top:11px;width:8px;height:9px;border-radius:50%;background:#a8a098"></div></div>
 <div class="t" style="left:40px;top:370px;font-family:'Liberation Serif',serif;font-size:5.7px;color:#222">Бұл суреттердің қандай байланысы көріп тұрмыз?</div>
 <!-- gallery panel -->
 <div class="a" style="left:509px;top:270px;width:192px;height:125px;background:linear-gradient(90deg,#fbfaf4,#fdfcf7 60%,#f8f6ee)"></div>
 <div class="t" style="left:540px;top:272px;font-family:'Liberation Serif',serif;font-weight:bold;font-size:10.5px;color:#111">«Галереяны&nbsp; шарлау»&nbsp; әдісі</div>
 <div class="a" style="left:513px;top:289px;width:182px;height:4px;background:repeating-linear-gradient(90deg,#fff 0 4px,#9aa8b0 4px 7px,#d8dde0 7px 22px,#fff 22px 28px)"></div>
 <div class="a" style="left:514px;top:294px;width:180px;height:4px;background:linear-gradient(90deg,#f6ecd8 0 10%,#efd9a8 10% 45%,#f6ecd8 45% 60%,#efd9a8 60% 100%)"></div>
 <div class="a" style="left:517px;top:300px;width:40px;height:2px;background:#d8d4cc"></div>
 <div class="a" style="left:515px;top:306px;width:176px;height:84px;background:#fcedbf"></div>
 <div class="a" style="left:543px;top:311px;width:31px;height:23px;background:#fff;box-shadow:0 1px 2px rgba(0,0,0,.25)"></div><div class="a" style="left:545px;top:314px;width:27px;height:18px;background:radial-gradient(ellipse,#8a7a50 0%,#2a2418 40%,#111 70%)"></div>
 <div class="a" style="left:572px;top:309px;width:28px;height:20px;background:#fff;box-shadow:0 1px 2px rgba(0,0,0,.25)"></div><div class="a" style="left:574px;top:312px;width:24px;height:15px;background:radial-gradient(ellipse,#c89a50 0%,#7a5030 50%,#4a3a2a 80%)"></div>
 <div class="a" style="left:616px;top:309px;width:31px;height:22px;background:#fff;box-shadow:0 1px 2px rgba(0,0,0,.25)"></div><div class="a" style="left:618px;top:311px;width:27px;height:18px;background:linear-gradient(#8a96b0,#4a5a7a 60%,#6a7088)"></div>
 <div class="a" style="left:645px;top:310px;width:31px;height:23px;background:#fff;box-shadow:0 1px 2px rgba(0,0,0,.25)"></div><div class="a" style="left:647.5px;top:312px;width:26.5px;height:18.6px;background:radial-gradient(ellipse,#f0b070 0%,#c06020 45%,#8a4a30 80%)"></div>
 <div class="a" style="left:519px;top:327px;width:33px;height:26px;background:#fff;box-shadow:0 1px 2px rgba(0,0,0,.25)"></div><div class="a" style="left:521px;top:329.7px;width:29px;height:21px;background:linear-gradient(90deg,#8a5a60,#c87a80 50%,#e0c0c8)"></div>
 <div class="a" style="left:565px;top:329px;width:33px;height:26px;background:#fff;box-shadow:0 1px 2px rgba(0,0,0,.25)"></div>
 <div class="a" style="left:574px;top:335px;width:6px;height:14px;background:#4a7a56;border-radius:45%"></div><div class="a" style="left:584px;top:335px;width:6px;height:14px;background:#4a7a56;border-radius:45%"></div>
 <div class="a" style="left:595px;top:322px;width:29px;height:22px;background:#fff;box-shadow:0 1px 2px rgba(0,0,0,.25)"></div><div class="a" style="left:597px;top:324px;width:25px;height:18px;background:linear-gradient(#a8b0b8,#3a4048 50%,#9aa0a8)"></div>
 <div class="a" style="left:544px;top:344px;width:30px;height:25px;background:#fff;box-shadow:0 1px 2px rgba(0,0,0,.25)"></div><div class="a" style="left:546px;top:346.6px;width:26px;height:20.4px;background:repeating-linear-gradient(90deg,#6ab8d0 0 3px,#a8d8e8 3px 5px)"></div>
 <div class="a" style="left:596px;top:344px;width:34px;height:24px;background:#fff;box-shadow:0 1px 2px rgba(0,0,0,.25)"></div><div class="a" style="left:598.7px;top:346.6px;width:29px;height:19.4px;background:radial-gradient(ellipse,#3a3a3a 0%,#8a8a60 40%,#c8c8b0 80%)"></div>
 <div class="a" style="left:624px;top:337px;width:28px;height:9.6px;background:#fff;box-shadow:0 1px 1px rgba(0,0,0,.15)"></div>
 <div class="a" style="left:654px;top:339px;width:28px;height:8.5px;background:#fff;box-shadow:0 1px 1px rgba(0,0,0,.15)"></div>
 <div class="a" style="left:629.7px;top:353px;width:28px;height:8.6px;background:#fff;box-shadow:0 1px 1px rgba(0,0,0,.15)"></div>
 <div class="a" style="left:517px;top:359.7px;width:28px;height:8.3px;background:#fff;box-shadow:0 1px 1px rgba(0,0,0,.15)"></div>
 <div class="a" style="left:574px;top:359.7px;width:21px;height:8.3px;background:#fff;box-shadow:0 1px 1px rgba(0,0,0,.15)"></div>
 <div class="a" style="left:528px;top:374.8px;width:30px;height:8.2px;background:#fff;box-shadow:0 1px 1px rgba(0,0,0,.15)"></div>
 <div class="a" style="left:559px;top:374.8px;width:28px;height:8.2px;background:#fff;box-shadow:0 1px 1px rgba(0,0,0,.15)"></div>
 <div class="a" style="left:622px;top:370px;width:29px;height:8.5px;background:#fff;box-shadow:0 1px 1px rgba(0,0,0,.15)"></div>
 <div class="a" style="left:588px;top:363.5px;width:28px;height:26px;background:#f4c0a0;border-radius:45% 45% 35% 35%;opacity:.85"></div>
 <div class="a" style="left:677.5px;top:378.5px;width:10.5px;height:10.5px;border-radius:50%;background:#3a80c8"></div>
</div></div>
<div class="a" style="left:127px;top:552px;width:137px;height:77px;overflow:hidden;box-shadow:0 0 1px rgba(0,0,0,.35)"><div class="a" style="left:0;top:0;width:702px;height:395px;transform:scale(0.19516);transform-origin:0 0;background:#fff"><div class="a" style="left:0px;top:0px;width:702px;height:395px;background:#fdfdfd"></div><div class="a" style="left:9px;top:5px;width:203px;height:119px;background:#fbf6d0"></div><div class="a" style="left:40px;top:5px;width:140px;height:8px;background:repeating-linear-gradient(90deg,#9ab 0 6px,transparent 6px 10px)"></div><div class="a" style="left:49px;top:40px;width:18px;height:70px;background:#4a8ac4"></div><div class="a" style="left:89px;top:40px;width:18px;height:70px;background:#4a8ac4"></div><div class="a" style="left:128px;top:40px;width:18px;height:70px;background:#4a8ac4"></div><div class="a" style="left:168px;top:40px;width:18px;height:70px;background:#4a8ac4"></div><div class="a" style="left:248px;top:10px;width:247px;height:97px;background:#fff"></div><div class="a" style="left:255px;top:25px;width:190px;height:60px;background:repeating-linear-gradient(90deg,#fff 0 5px,#777 5px 7px,#ccc 7px 12px)"></div><div class="a" style="left:478px;top:5px;width:222px;height:238px;background:repeating-linear-gradient(#fff 0 14px,#ccc 14px 15px)"></div><div class="a" style="left:478px;top:5px;width:222px;height:238px;background:repeating-linear-gradient(90deg,transparent 0 50px,rgba(0,0,0,.15) 50px 51px)"></div><div class="a" style="left:217px;top:115px;width:256px;height:133px;background:radial-gradient(circle at 15% 25%,#aaa 0,#666 6%,transparent 9%),radial-gradient(circle at 45% 25%,#aaa 0,#666 6%,transparent 9%),radial-gradient(circle at 75% 25%,#bbb 0,#666 6%,transparent 9%),radial-gradient(circle at 30% 60%,#999 0,#555 6%,transparent 9%),radial-gradient(circle at 60% 85%,#bbb 0,#666 6%,transparent 9%),radial-gradient(circle at 88% 80%,#ccc 0,#777 6%,transparent 9%),#151515"></div><div class="a" style="left:49px;top:182px;width:52px;height:52px;background:radial-gradient(circle,#3a7ad0 0 65%,transparent 67%)"></div><div class="a" style="left:83px;top:182px;width:20px;height:26px;background:#f0a040"></div><div class="a" style="left:30px;top:290px;width:60px;height:60px;background:linear-gradient(90deg,transparent 0 20%,#d86030 20% 32%,transparent 32% 40%,#d86030 40% 52%,transparent 52% 60%,#e08040 60% 72%,transparent 72%)"></div><div class="a" style="left:120px;top:300px;width:50px;height:30px;background:#3aa0b8"></div><div class="a" style="left:40px;top:265px;width:60px;height:6px;background:#e88a8a"></div><div class="a" style="left:150px;top:265px;width:60px;height:6px;background:#e88a8a"></div><div class="a" style="left:261px;top:292px;width:80px;height:80px;background:radial-gradient(circle,#e8742a 0 45%,#3a86d0 46% 68%,transparent 70%)"></div><div class="a" style="left:478px;top:243px;width:222px;height:150px;background:#fbf4b0"></div><div class="a" style="left:510px;top:270px;width:14px;height:110px;background:#40a8b0"></div><div class="a" style="left:526px;top:320px;width:14px;height:60px;background:#d88a50"></div><div class="a" style="left:570px;top:270px;width:14px;height:110px;background:#40a8b0"></div><div class="a" style="left:586px;top:300px;width:14px;height:80px;background:#d88a50"></div><div class="a" style="left:630px;top:290px;width:14px;height:90px;background:#40a8b0"></div><div class="a" style="left:646px;top:300px;width:14px;height:80px;background:#d88a50"></div><div class="a" style="left:680px;top:300px;width:14px;height:80px;background:#40a8b0"></div></div></div>
<div class="a" style="left:127px;top:639px;width:137px;height:77px;overflow:hidden;box-shadow:0 0 1px rgba(0,0,0,.35)"><div class="a" style="left:0;top:0;width:702px;height:395px;transform:scale(0.19516);transform-origin:0 0;background:#f4f4f4"><div class="a" style="left:0px;top:0px;width:702px;height:395px;background:#f4f4f4"></div><div class="a" style="left:9px;top:13px;width:212px;height:170px;background:radial-gradient(circle at 20% 30%,#ccc 0,#888 4%,transparent 7%),radial-gradient(circle at 40% 30%,#ccc 0,#888 4%,transparent 7%),radial-gradient(circle at 60% 30%,#ccc 0,#888 4%,transparent 7%),radial-gradient(circle at 80% 35%,#ccc 0,#888 4%,transparent 7%),radial-gradient(circle at 25% 60%,#bbb 0,#777 4%,transparent 7%),radial-gradient(circle at 55% 60%,#bbb 0,#777 4%,transparent 7%),#1e1a1a"></div><div class="a" style="left:239px;top:10px;width:234px;height:150px;background:linear-gradient(90deg,#111 0 30%,#222 30% 55%,#3a6ac0 55% 100%)"></div><div class="a" style="left:239px;top:110px;width:234px;height:50px;background:#0a0a0a"></div><div class="a" style="left:270px;top:25px;width:40px;height:60px;background:radial-gradient(ellipse,#c8c0b8 0 40%,#333 60%,transparent 70%)"></div><div class="a" style="left:491px;top:13px;width:204px;height:165px;background:radial-gradient(circle at 20% 25%,#ddd 0,#999 8%,transparent 12%),radial-gradient(circle at 50% 25%,#ddd 0,#999 8%,transparent 12%),radial-gradient(circle at 80% 25%,#ddd 0,#999 8%,transparent 12%),radial-gradient(circle at 35% 65%,#ccc 0,#888 8%,transparent 12%),radial-gradient(circle at 65% 65%,#ccc 0,#888 8%,transparent 12%),#2a2624"></div></div></div>
</div></div>
<!-- edit area -->
<div class="a" style="left:280px;top:185px;width:877px;height:457px;background:#c9cacf"></div>
<div class="a" style="left:1157px;top:185px;width:10px;height:457px;background:#e3e5e9;border-left:1px solid #d3d6db"></div>
<div class="t" style="left:1159px;top:188px;font-size:5px;color:#444">▲</div>
<div class="t" style="left:1159px;top:605px;font-size:5px;color:#777">▼</div>
<svg class="a" style="left:1158px;top:614px" width="8" height="16" viewBox="0 0 8 16"><path d="M1 4 L4 1 L7 4 Z M1 7 L4 4 L7 7 Z M1 9 L4 12 L7 9 Z M1 12 L4 15 L7 12 Z" fill="#333"/></svg>
<div class="t" style="left:1159px;top:645px;font-size:5px;color:#999">▲</div>
<div class="t" style="left:1159px;top:661px;font-size:5px;color:#999">▼</div>
<div class="a" style="left:1158px;top:400px;width:7px;height:12px;background:#f8f9fa;border:1px solid #b8bcc2"></div>
<!-- notes -->
<div class="a" style="left:280px;top:641px;width:887px;height:2px;background:#e8eaed"></div>
<div class="a" style="left:280px;top:643px;width:877px;height:26px;background:#fff"></div>
<div class="a" style="left:1157px;top:643px;width:10px;height:26px;background:#e9ebee"></div>
<div class="t" style="left:286px;top:647px;font-size:8.7px;color:#333">Заметки к слайду</div>
<!-- status bar -->
<div class="a" style="left:113px;top:669px;width:1054px;height:12px;background:linear-gradient(#c4c6ca 0%,#e4e4e8 15%,#dcdde1 55%,#c4c9d0 90%,#b4bac2 100%)"></div>
<div class="t" style="left:118px;top:671px;font-size:5.9px;color:#555">Слайд 18 из 34</div>
<div class="a" style="left:166px;top:670px;width:1px;height:10px;background:#c5c9ce"></div>
<div class="t" style="left:171px;top:671px;font-size:6px;color:#555">"Office Theme"</div>
<div class="a" style="left:220px;top:670px;width:1px;height:10px;background:#c5c9ce"></div>
<div class="t" style="left:223px;top:671px;font-size:6.2px;color:#555">русский</div>
<div class="a" style="left:251px;top:670px;width:1px;height:10px;background:#c5c9ce"></div>
<div class="a" style="left:1012px;top:670px;width:1px;height:10px;background:#e0b040"></div>
<div class="a" style="left:1014px;top:670px;width:9px;height:10px;background:#fbe7a8;border:1px solid #e8c060"></div>
<div class="t" style="left:1026px;top:670px;font-size:7px;color:#777;letter-spacing:2px">⊞▯⊟</div>
<div class="t" style="left:1059px;top:671px;font-size:6px;color:#777">100%</div>
<div class="a" style="left:1080px;top:671px;width:8px;height:8px;border-radius:50%;border:1px solid #888;background:#fafafa"></div>
<div class="a" style="left:1082px;top:675px;width:4px;height:1px;background:#555"></div>
<div class="a" style="left:1089px;top:675px;width:31px;height:1px;background:#aaa"></div>
<div class="a" style="left:1113px;top:671px;width:5px;height:8px;border-radius:2px;border:1px solid #999;background:#fff"></div>
<div class="a" style="left:1120px;top:675px;width:22px;height:1px;background:#aaa"></div>
<div class="a" style="left:1142px;top:671px;width:8px;height:8px;border-radius:50%;border:1px solid #888;background:#fafafa"></div>
<div class="a" style="left:1144px;top:675px;width:4px;height:1px;background:#444"></div><div class="a" style="left:1145.5px;top:673px;width:1px;height:4px;background:#444"></div>
<div class="a" style="left:1156px;top:671px;width:8px;height:8px;border:1px dashed #888"></div>


<!-- SLIDE -->
<div class="a" id="slide" style="left:368px;top:216px;width:702px;height:395px;overflow:hidden;box-shadow:1px 2px 4px rgba(0,0,0,.25);background:linear-gradient(90deg,#e8e9ef 0%,#eff0f4 25%,#f9f9fb 40%,#fdfdfe 55%,#f6f6f8 72%,#ecedf1 100%)">
 <div class="a" style="left:0;top:0;width:4px;height:395px;background:#f6f6f8"></div>
 <!-- left task panel -->
 <div class="a" style="left:4px;top:0;width:199px;height:124px;background:#fff"></div>
 <div class="a" style="left:4px;top:0;width:199px;height:19px;background:#4fcfd5"></div>
 <div class="a" style="left:34px;top:2px;width:14px;height:15px;border-radius:4px;background:linear-gradient(135deg,#a45cb0,#6a2c84)"></div>
 <div class="a" style="left:37px;top:5px;width:4px;height:9px;background:#f0d8f0;border-radius:1px"></div>
 <div class="a" style="left:42px;top:6px;width:4px;height:8px;background:#fff;border-radius:1px"></div>
 <div class="t" style="left:54px;top:7px;font-size:5.8px;color:#f4fbfb">ШЫҒАРМАШЫЛЫҚ ЖҰМЫС</div>
 <div class="t" style="left:14px;top:23px;font-size:5.5px;color:#222;font-weight:bold">Тапсырма</div>
 <div class="t" style="left:15px;top:31px;font-size:5.5px;color:#222">«Қазақстанның қандай жерлерін әлемнің жеті кереметіне қосар едің?»</div>
 <div class="t" style="left:14px;top:37px;font-size:5.5px;color:#222">тақырыбында  сурет салу</div>
 <div class="a" style="left:21.2px;top:55.3px;width:33.3px;height:22.4px;background:linear-gradient(#dfe4e6 0%,#8a9a7a 18%,#4a6a3a 50%,#5a7040 100%);overflow:hidden"><div class="a" style="left:16px;top:0px;width:12px;height:8px;background:#b08070;"></div><div class="a" style="left:0px;top:9px;width:33px;height:5px;background:#a89078;transform:rotate(-12deg)"></div><div class="a" style="left:14px;top:12px;width:20px;height:4px;background:#c8b8a0;transform:rotate(35deg)"></div></div>
 <div class="a" style="left:55.7px;top:45.6px;width:35px;height:32px;background:linear-gradient(#e8ecef 0%,#8a9898 12%,#4a5a48 30%,#3a4a2a 60%,#6a7a48 100%);overflow:hidden"><div class="a" style="left:12px;top:2px;width:14px;height:16px;background:#2a3a22;border-radius:50% 50% 10% 10%"></div><div class="a" style="left:0px;top:18px;width:18px;height:14px;background:repeating-linear-gradient(60deg,#c8c8a0 0 2px,#4a5a30 2px 5px);"></div></div>
 <div class="a" style="left:93.3px;top:45.6px;width:34.5px;height:32px;background:linear-gradient(#2e5cc0 0%,#5a80c0 25%,#7a8aa0 45%,#4a5060 70%,#1a1a22 85%,#c8c8d0 100%);overflow:hidden"><div class="a" style="left:15px;top:3px;width:5px;height:23px;background:#c8ccd4;"></div><div class="a" style="left:11px;top:8px;width:13px;height:2px;background:#c0c4cc;"></div><div class="a" style="left:22px;top:14px;width:12px;height:10px;background:rgba(230,230,235,.6);border-radius:40%"></div></div>
 <div class="a" style="left:130.2px;top:45.6px;width:34.5px;height:32px;background:linear-gradient(90deg,#6a3020 0%,#b86a48 20%,#8a4a30 40%,#c87a58 60%,#9a5a3a 80%,#6a3a28 100%);overflow:hidden"><div class="a" style="left:8px;top:8px;width:18px;height:6px;background:rgba(60,30,20,.5);"></div><div class="a" style="left:6px;top:20px;width:22px;height:3px;background:rgba(230,160,120,.5);"></div></div>
 <div class="a" style="left:21.2px;top:80.1px;width:46px;height:35.1px;background:linear-gradient(#141c40 0%,#2a3a6a 22%,#8a5a30 35%,#f0a050 55%,#c06a28 70%,#3a4a7a 85%,#8aa0c8 100%);overflow:hidden"><div class="a" style="left:0px;top:17px;width:46px;height:3px;background:repeating-linear-gradient(90deg,#fbd080 0 3px,#6a3a20 3px 6px);"></div><div class="a" style="left:0px;top:23px;width:46px;height:3px;background:repeating-linear-gradient(90deg,#fbd080 0 3px,#6a3a20 3px 6px);"></div></div>
 <div class="a" style="left:69px;top:80.1px;width:46.7px;height:35.1px;background:linear-gradient(#7aa0d8 0%,#b8cce8 30%,#e8e0c8 60%,#5a5a50 82%,#a0a8b0 100%);overflow:hidden"><div class="a" style="left:16px;top:6px;width:14px;height:10px;background:#e8dcb0;border-radius:50% 50% 0 0"></div><div class="a" style="left:11px;top:14px;width:24px;height:14px;background:#e8d8a8;"></div><div class="a" style="left:5px;top:4px;width:2px;height:24px;background:#6a6050;"></div><div class="a" style="left:39px;top:4px;width:2px;height:24px;background:#6a6050;"></div><div class="a" style="left:19px;top:29px;width:8px;height:6px;background:#c8d0d8;"></div></div>
 <div class="a" style="left:117.5px;top:80.1px;width:47.2px;height:35.1px;background:linear-gradient(#a8c4e4 0%,#c0d0e0 30%,#8a8a70 65%,#4a4a48 100%);overflow:hidden"><div class="a" style="left:6px;top:4px;width:0;height:0;border-left:18px solid transparent;border-right:18px solid transparent;border-bottom:19px solid #e4dccc"></div><div class="a" style="left:4px;top:23px;width:40px;height:12px;background:linear-gradient(#5a5a58,#3a3a40);"></div></div>
 <div class="a" style="left:4px;top:117px;width:199px;height:6px;background:#52c6cc"></div>
 <!-- right desk photo -->
 <div class="a" style="left:507px;top:0;width:195px;height:124px;background:repeating-linear-gradient(90deg,#e6e6ea 0 14px,#cfcfd4 14px 15px),linear-gradient(90deg,#d8d8dc,#ececef)"></div>
 <div class="a" style="left:507px;top:101px;width:195px;height:23px;background:linear-gradient(#c8c8cc 0,#eeeef0 12%,#f2f2f4 60%,#dcdce0 100%)"></div>
 <div class="a" style="left:519px;top:17px;width:117px;height:71px;background:#111;border-radius:2px"></div>
 <div class="a" style="left:521px;top:19px;width:113px;height:66px;background:#fdfdfd"></div>
 <div class="a" style="left:519px;top:88px;width:117px;height:12px;background:linear-gradient(#e8e8ea,#cfcfd3);border-radius:0 0 2px 2px"></div>
 <div class="a" style="left:566px;top:100px;width:24px;height:8px;background:linear-gradient(#b8b8bc,#d8d8dc)"></div>
 <div class="t" style="left:524px;top:27px;font-size:4.8px;color:#222;font-family:'Liberation Serif',serif">Тақырыбы:  <b style="font-size:5.5px">«Электронды кесте.</b></div>
 <div class="t" style="left:548px;top:34px;font-size:5.5px;color:#222;font-family:'Liberation Serif',serif;font-weight:bold">Диаграммалар (charts)»</div>
 <div class="t" style="left:526px;top:42px;font-size:4.2px;color:#333;font-family:'Liberation Serif',serif;line-height:6.5px">Үйренетінім:<br>Excel кестесінің мәліметтерін диаграммалар құрастыру<br>&nbsp;&nbsp;Критерийлер:<br>&nbsp;-диаграмманың түрлері мен типтерін білу<br>&nbsp;- кестенің деректерін графикалық түрде<br>&nbsp;&nbsp;ұсыну (диаграммалар құру) дағды.</div>
 <div class="a" style="left:552px;top:90px;width:15px;height:14px;background:#e8ec70;transform:rotate(-8deg)"></div>
 <div class="a" style="left:612px;top:92px;width:18px;height:18px;border-radius:50%;background:#f4f4f0;border:2px solid #222"></div>
 <div class="a" style="left:561px;top:110px;width:60px;height:10px;background:#f0f0f2;border:1px solid #c8c8cc"></div>
 <div class="a" style="left:645px;top:95px;width:54px;height:20px;background:linear-gradient(#3a6a4a 0%,#2a5a3a 50%,#506a50 70%,#1a3a2a 100%)"></div>
 <div class="a" style="left:646px;top:117px;width:50px;height:5px;background:#7a7a80"></div>
 <div class="a" style="left:657px;top:80px;width:12px;height:15px;background:#d8a860"></div>
 <div class="a" style="left:655px;top:68px;width:16px;height:12px;background:linear-gradient(90deg,#d04040,#e8c040,#40a040,#4060c0)"></div>
 <div class="a" style="left:645px;top:13px;width:52px;height:44px;background:#f2f2f4;border:1px solid #d8d8dc;transform:rotate(-4deg)"></div>
 <div class="a" style="left:659px;top:5px;width:12px;height:14px;background:#e8f060"></div>
 <div class="a" style="left:675px;top:12px;width:12px;height:12px;background:#f8b0e0"></div>
 <div class="a" style="left:639px;top:52px;width:14px;height:14px;background:#f8b0e0"></div>
 <div class="a" style="left:670px;top:59px;width:12px;height:15px;background:#e8f060"></div>
 <div class="a" style="left:509px;top:55px;width:14px;height:14px;border-radius:50%;background:radial-gradient(#a888b8,#705a80 70%,transparent 71%)"></div>
 <div class="a" style="left:512px;top:68px;width:7px;height:48px;background:linear-gradient(90deg,#ccc,#f0f0f0,#bbb);border-radius:2px"></div>
 <!-- center title -->
 <div class="t" style="left:232px;top:14.5px;font-family:'Liberation Serif',serif;font-weight:bold;font-size:14.6px;line-height:1;color:#c72530">Сабақты зерттеуді қалай бастадық?</div>
 <div class="a" style="left:216px;top:45px;width:262px;font-family:'Liberation Serif',serif;font-weight:bold;font-size:11.7px;line-height:13.6px;color:#1f2a5c;text-align:center;white-space:nowrap"><span style="color:#c72530">4-топтың зерттеу сұрағы:</span>«Шығармашылық<br>тапсырмалар арқылы 8 «Б» сынып<br>оқушыларының танымдық белсенділігін қалай<br>дамытуға болады?»</div>
 <!-- bottom center text -->
 <div class="a" style="left:219px;top:305px;width:258px;font-family:'Liberation Serif',serif;font-weight:bold;font-size:14.6px;line-height:17.4px;color:#d0202a;text-align:center">Топ модераторы:информатика<br>пәні мұғалімі<br><span style="color:#1f2a5c">Сағындық А.О</span></div>
 <!-- arrows -->
 <svg class="a" style="left:0;top:0" width="702" height="395" viewBox="0 0 702 395">
  <defs>
   <linearGradient id="gO" gradientUnits="userSpaceOnUse" x1="216" y1="115" x2="381" y2="242"><stop offset="0" stop-color="#fcc36c"/><stop offset=".6" stop-color="#f9ad3a"/><stop offset="1" stop-color="#f79c1a"/></linearGradient>
   <linearGradient id="gP" gradientUnits="userSpaceOnUse" x1="314" y1="156" x2="483" y2="288"><stop offset="0" stop-color="#ef999e"/><stop offset=".5" stop-color="#ec727a"/><stop offset="1" stop-color="#e6434c"/></linearGradient>
   <linearGradient id="gT" gradientUnits="userSpaceOnUse" x1="384" y1="209" x2="482" y2="110"><stop offset="0" stop-color="#3aa0ad"/><stop offset=".5" stop-color="#31b6c6"/><stop offset="1" stop-color="#21cbe4"/></linearGradient>
   <linearGradient id="gU" gradientUnits="userSpaceOnUse" x1="212" y1="289" x2="315" y2="187"><stop offset="0" stop-color="#c394d8"/><stop offset=".5" stop-color="#9a62b8"/><stop offset="1" stop-color="#6e3a8c"/></linearGradient>
   <filter id="sh" x="-20%" y="-20%" width="140%" height="140%"><feGaussianBlur in="SourceAlpha" stdDeviation="5"/><feOffset dx="3" dy="5"/><feComponentTransfer><feFuncA type="linear" slope=".3"/></feComponentTransfer><feMerge><feMergeNode/><feMergeNode in="SourceGraphic"/></feMerge></filter>
  </defs>
  <g filter="url(#sh)" stroke-linejoin="round" stroke-width="10">
   <polygon points="422.0,111.0 481.5,111.0 481.5,169.0 461.9,169.0 423.0,207.9 385.1,170.0 436.1,119.0 422.0,119.0" fill="url(#gT)" stroke="url(#gT)"/>
   <polygon points="213.0,288.0 213.0,232.0 220.0,232.0 220.0,247.1 279.0,188.1 313.4,222.5 255.9,280.0 271.0,280.0 271.0,288.0" fill="url(#gU)" stroke="url(#gU)"/>
   <polygon points="217.0,116.0 273.0,116.0 273.0,124.0 260.9,124.0 377.9,241.0 305.1,241.0 235.1,171.0 217.0,171.0" fill="url(#gO)" stroke="url(#gO)"/>
   <polygon points="317.0,157.5 387.4,157.5 473.0,243.1 473.0,229.0 482.0,229.0 482.0,287.0 422.0,287.0 422.0,280.0 439.0,280.0" fill="url(#gP)" stroke="url(#gP)"/>
   <polygon points="305,152.5 389.5,152.5 412,175 327.5,175" fill="url(#gP)"/>
   <polygon points="390,246 303,246 283,226 370,226" fill="url(#gO)"/>
  </g>
  <polygon points="301,156 308,156 350,198 343,198" fill="#4a2858"/>
  <polygon points="347,202 354,202 398,246 391,246" fill="#1a6a6e"/>
 </svg>
 <div class="t" style="left:272px;top:173px;transform:translate(-50%,-50%) rotate(45deg);font-family:'Liberation Serif',serif;font-weight:bold;font-size:14.6px;color:#111">№1 зерттеу сабағы</div>
 <div class="t" style="left:414.5px;top:222px;transform:translate(-50%,-50%) rotate(45deg);font-family:'Liberation Serif',serif;font-weight:bold;font-size:14.8px;color:#111">№4 зерттеу сабағы</div>
 <div class="t" style="left:449.7px;top:145px;transform:translate(-50%,-50%) rotate(-45deg);font-family:'Liberation Serif',serif;font-weight:bold;font-size:14.6px;line-height:19px;color:#111;text-align:center">№3 зерттеу<br>сабағы</div>
 <div class="t" style="left:249px;top:252px;transform:translate(-50%,-50%) rotate(-45deg);font-family:'Liberation Serif',serif;font-weight:bold;font-size:14.6px;line-height:19px;color:#111;text-align:center">№2 зерттеу<br>сабағы</div>
 <!-- left names -->
 <svg class="a" style="left:3px;top:142px" width="30" height="30" viewBox="0 0 30 30"><g fill="#f6b347"><rect x="12" y="0.5" width="6" height="8" rx="2" transform="rotate(0 15 15)"/><rect x="12" y="0.5" width="6" height="8" rx="2" transform="rotate(45 15 15)"/><rect x="12" y="0.5" width="6" height="8" rx="2" transform="rotate(90 15 15)"/><rect x="12" y="0.5" width="6" height="8" rx="2" transform="rotate(135 15 15)"/><rect x="12" y="0.5" width="6" height="8" rx="2" transform="rotate(180 15 15)"/><rect x="12" y="0.5" width="6" height="8" rx="2" transform="rotate(225 15 15)"/><rect x="12" y="0.5" width="6" height="8" rx="2" transform="rotate(270 15 15)"/><rect x="12" y="0.5" width="6" height="8" rx="2" transform="rotate(315 15 15)"/><circle cx="15" cy="15" r="10.5"/></g><circle cx="15" cy="15" r="5" fill="#eef0f4"/></svg>
 <div class="t" style="left:39px;top:135px;font-family:'Liberation Serif',serif;font-weight:bold;font-size:17.2px;line-height:1;color:#1c2b5a">Қазбек А.С</div>
 <div class="a" style="left:39px;top:155px;font-family:'Liberation Serif',serif;-webkit-text-stroke:.25px;font-size:11.5px;line-height:13.6px;color:#2a3560;white-space:nowrap">Сабақтың тақырыбы: «Мен<br>әлемді сүйемін»</div>
 <svg class="a" style="left:5px;top:220px" width="27" height="28" viewBox="0 0 27 28"><path d="M3 3 H14 L18 7 M21 15 V25 H3 V3" fill="none" stroke="#7b4a8c" stroke-width="3"/><path d="M9 21 L10 16 L21 5 L25 9 L14 20 Z" fill="#7b4a8c"/></svg>
 <div class="t" style="left:35px;top:207.5px;font-family:'Liberation Serif',serif;font-weight:bold;font-size:17.4px;line-height:1;color:#1c2b5a">Сүлейменова Д.Н</div>
 <div class="a" style="left:35px;top:227px;font-family:'Liberation Serif',serif;-webkit-text-stroke:.25px;font-size:11.5px;line-height:14.6px;color:#2a3560;white-space:nowrap">Сабақтың тақырыбы: «Үстел<br>ойындарының тұжырымдамасы»</div>
 <!-- right names -->
 <svg class="a" style="left:496px;top:144px" width="34" height="28" viewBox="0 0 34 28"><rect x="0" y="5" width="34" height="23" rx="2" fill="#19a2b3"/><rect x="11" y="1" width="12" height="6" rx="2" fill="none" stroke="#19a2b3" stroke-width="2.5"/><rect x="4" y="5" width="2" height="23" fill="#eef0f2"/><rect x="28" y="5" width="2" height="23" fill="#eef0f2"/><rect x="14" y="4" width="6" height="2" fill="#eef0f2"/></svg>
 <div class="t" style="left:533px;top:132px;font-family:'Liberation Serif',serif;font-weight:bold;font-size:17.4px;line-height:1;color:#1c2b5a">Сағындық А.О</div>
 <div class="a" style="left:533px;top:152px;font-family:'Liberation Serif',serif;-webkit-text-stroke:.25px;font-size:11.5px;line-height:14px;color:#2a3560;white-space:nowrap">Сабақтың&nbsp; тақырыбы:<br>«Электронды&nbsp; кесте.<br>Диаграммалар&nbsp; (charts)»</div>
 <svg class="a" style="left:500px;top:213px" width="29" height="32" viewBox="0 0 29 32"><path d="M2 2 H27 V20 L19 30 H2 Z" fill="none" stroke="#e0686e" stroke-width="3"/><path d="M27 20 L19 30 V22 Z" fill="#e0686e"/><line x1="7" y1="10" x2="22" y2="10" stroke="#e0686e" stroke-width="2.5"/><line x1="7" y1="15" x2="22" y2="15" stroke="#e0686e" stroke-width="2.5"/><line x1="7" y1="20" x2="15" y2="20" stroke="#e0686e" stroke-width="2.5"/></svg>
 <div class="t" style="left:529px;top:201px;font-family:'Liberation Serif',serif;font-weight:bold;font-size:17.2px;line-height:1;color:#1c2b5a">Байсүйеуова Г.Б</div>
 <div class="a" style="left:529px;top:222px;font-family:'Liberation Serif',serif;-webkit-text-stroke:.25px;font-size:11.5px;line-height:13px;color:#2a3560;white-space:nowrap">Сабақтың тақырыбы: «Қазақтың<br>ұлттық сәндік-&nbsp; қолданбалы<br>бұйымдары»</div>
 <!-- miga panel -->
 <div class="a" style="left:4px;top:270px;width:199px;height:125px;background:linear-gradient(90deg,#e9c48e,#f3dcb0 50%,#e9c48e)"></div>
 <div class="a" style="left:12px;top:279px;width:183px;height:107px;background:#fdfcfa;border:1px solid #e8d0a8;box-shadow:0 0 0 2px #f6ead4"></div>
 <div class="a" style="left:4px;top:328px;width:12px;height:10px;background:#4a3a30"></div>
 <div class="a" style="left:191px;top:328px;width:12px;height:10px;background:#4a3a30"></div>
 <div class="t" style="left:62px;top:281px;font-family:'Liberation Serif',serif;font-size:11.2px;color:#c8202a">«Миға шабуыл»</div>
 <div class="a" style="left:30px;top:295px;width:40px;height:26px;background:linear-gradient(150deg,#3a2820 0%,#8a5a40 40%,#5a3a28 70%,#2a1a10 100%);transform:skew(-10deg,10deg)"></div>
 <div class="a" style="left:79px;top:301px;width:49px;height:34px;background:linear-gradient(135deg,#7a6a5a 0%,#b8a890 35%,#3a8a80 60%,#d8d0c0 100%)"></div>
 <div class="a" style="left:140px;top:291px;width:41px;height:37px;background:linear-gradient(120deg,#d8b898 0%,#a86a40 40%,#6a6a78 70%,#c89070 100%)"></div>
 <div class="a" style="left:22px;top:330px;width:37px;height:37px;background:linear-gradient(160deg,#8a5a30 0%,#c89058 35%,#6a4a20 65%,#b88050 100%)"></div>
 <div class="a" style="left:64px;top:334px;width:32px;height:33px;background:#f4f2f0;overflow:hidden"><div class="a" style="left:9px;top:4px;width:16px;height:20px;border-radius:50%;background:#2a1a18"></div><div class="a" style="left:11px;top:8px;width:12px;height:15px;border-radius:45%;background:#e8c4a8"></div><div class="a" style="left:4px;top:24px;width:28px;height:14px;border-radius:40% 40% 0 0;background:#3a1a20"></div></div>
 <div class="a" style="left:113px;top:330px;width:52px;height:37px;background:linear-gradient(#ddd,#bbb);overflow:hidden"><div class="a" style="left:0;top:0;width:52px;height:16px;background:repeating-linear-gradient(90deg,#222 0 6px,#e8e8e8 6px 12px)"></div><div class="a" style="left:4px;top:12px;width:16px;height:26px;border-radius:45% 45% 0 0;background:#2a2a2a"></div><div class="a" style="left:8px;top:9px;width:8px;height:9px;border-radius:50%;background:#b8b0a8"></div><div class="a" style="left:30px;top:14px;width:18px;height:24px;border-radius:45% 45% 0 0;background:#333"></div><div class="a" style="left:35px;top:11px;width:8px;height:9px;border-radius:50%;background:#a8a098"></div></div>
 <div class="t" style="left:40px;top:370px;font-family:'Liberation Serif',serif;font-size:5.7px;color:#222">Бұл суреттердің қандай байланысы көріп тұрмыз?</div>
 <!-- gallery panel -->
 <div class="a" style="left:509px;top:270px;width:192px;height:125px;background:linear-gradient(90deg,#fbfaf4,#fdfcf7 60%,#f8f6ee)"></div>
 <div class="t" style="left:540px;top:272px;font-family:'Liberation Serif',serif;font-weight:bold;font-size:10.5px;color:#111">«Галереяны&nbsp; шарлау»&nbsp; әдісі</div>
 <div class="a" style="left:513px;top:289px;width:182px;height:4px;background:repeating-linear-gradient(90deg,#fff 0 4px,#9aa8b0 4px 7px,#d8dde0 7px 22px,#fff 22px 28px)"></div>
 <div class="a" style="left:514px;top:294px;width:180px;height:4px;background:linear-gradient(90deg,#f6ecd8 0 10%,#efd9a8 10% 45%,#f6ecd8 45% 60%,#efd9a8 60% 100%)"></div>
 <div class="a" style="left:517px;top:300px;width:40px;height:2px;background:#d8d4cc"></div>
 <div class="a" style="left:515px;top:306px;width:176px;height:84px;background:#fcedbf"></div>
 <div class="a" style="left:543px;top:311px;width:31px;height:23px;background:#fff;box-shadow:0 1px 2px rgba(0,0,0,.25)"></div><div class="a" style="left:545px;top:314px;width:27px;height:18px;background:radial-gradient(ellipse,#8a7a50 0%,#2a2418 40%,#111 70%)"></div>
 <div class="a" style="left:572px;top:309px;width:28px;height:20px;background:#fff;box-shadow:0 1px 2px rgba(0,0,0,.25)"></div><div class="a" style="left:574px;top:312px;width:24px;height:15px;background:radial-gradient(ellipse,#c89a50 0%,#7a5030 50%,#4a3a2a 80%)"></div>
 <div class="a" style="left:616px;top:309px;width:31px;height:22px;background:#fff;box-shadow:0 1px 2px rgba(0,0,0,.25)"></div><div class="a" style="left:618px;top:311px;width:27px;height:18px;background:linear-gradient(#8a96b0,#4a5a7a 60%,#6a7088)"></div>
 <div class="a" style="left:645px;top:310px;width:31px;height:23px;background:#fff;box-shadow:0 1px 2px rgba(0,0,0,.25)"></div><div class="a" style="left:647.5px;top:312px;width:26.5px;height:18.6px;background:radial-gradient(ellipse,#f0b070 0%,#c06020 45%,#8a4a30 80%)"></div>
 <div class="a" style="left:519px;top:327px;width:33px;height:26px;background:#fff;box-shadow:0 1px 2px rgba(0,0,0,.25)"></div><div class="a" style="left:521px;top:329.7px;width:29px;height:21px;background:linear-gradient(90deg,#8a5a60,#c87a80 50%,#e0c0c8)"></div>
 <div class="a" style="left:565px;top:329px;width:33px;height:26px;background:#fff;box-shadow:0 1px 2px rgba(0,0,0,.25)"></div>
 <div class="a" style="left:574px;top:335px;width:6px;height:14px;background:#4a7a56;border-radius:45%"></div><div class="a" style="left:584px;top:335px;width:6px;height:14px;background:#4a7a56;border-radius:45%"></div>
 <div class="a" style="left:595px;top:322px;width:29px;height:22px;background:#fff;box-shadow:0 1px 2px rgba(0,0,0,.25)"></div><div class="a" style="left:597px;top:324px;width:25px;height:18px;background:linear-gradient(#a8b0b8,#3a4048 50%,#9aa0a8)"></div>
 <div class="a" style="left:544px;top:344px;width:30px;height:25px;background:#fff;box-shadow:0 1px 2px rgba(0,0,0,.25)"></div><div class="a" style="left:546px;top:346.6px;width:26px;height:20.4px;background:repeating-linear-gradient(90deg,#6ab8d0 0 3px,#a8d8e8 3px 5px)"></div>
 <div class="a" style="left:596px;top:344px;width:34px;height:24px;background:#fff;box-shadow:0 1px 2px rgba(0,0,0,.25)"></div><div class="a" style="left:598.7px;top:346.6px;width:29px;height:19.4px;background:radial-gradient(ellipse,#3a3a3a 0%,#8a8a60 40%,#c8c8b0 80%)"></div>
 <div class="a" style="left:624px;top:337px;width:28px;height:9.6px;background:#fff;box-shadow:0 1px 1px rgba(0,0,0,.15)"></div>
 <div class="a" style="left:654px;top:339px;width:28px;height:8.5px;background:#fff;box-shadow:0 1px 1px rgba(0,0,0,.15)"></div>
 <div class="a" style="left:629.7px;top:353px;width:28px;height:8.6px;background:#fff;box-shadow:0 1px 1px rgba(0,0,0,.15)"></div>
 <div class="a" style="left:517px;top:359.7px;width:28px;height:8.3px;background:#fff;box-shadow:0 1px 1px rgba(0,0,0,.15)"></div>
 <div class="a" style="left:574px;top:359.7px;width:21px;height:8.3px;background:#fff;box-shadow:0 1px 1px rgba(0,0,0,.15)"></div>
 <div class="a" style="left:528px;top:374.8px;width:30px;height:8.2px;background:#fff;box-shadow:0 1px 1px rgba(0,0,0,.15)"></div>
 <div class="a" style="left:559px;top:374.8px;width:28px;height:8.2px;background:#fff;box-shadow:0 1px 1px rgba(0,0,0,.15)"></div>
 <div class="a" style="left:622px;top:370px;width:29px;height:8.5px;background:#fff;box-shadow:0 1px 1px rgba(0,0,0,.15)"></div>
 <div class="a" style="left:588px;top:363.5px;width:28px;height:26px;background:#f4c0a0;border-radius:45% 45% 35% 35%;opacity:.85"></div>
 <div class="a" style="left:677.5px;top:378.5px;width:10.5px;height:10.5px;border-radius:50%;background:#3a80c8"></div>
</div>
<div class="t" style="left:1086px;top:549.5px;transform:translate(-50%,-50%) rotate(90deg);font-size:9.1px;line-height:10px;font-weight:bold;background:linear-gradient(90deg,#f08a8a 0%,#e070a0 45%,#b040c8 100%);-webkit-background-clip:text;background-clip:text;color:transparent">www.MagicDiagram.com</div>
<svg class="a" style="left:1077px;top:539px" width="18" height="18" viewBox="0 0 18 18"><path d="M9 3 L15 9 L9 15 L3 9 Z" fill="none" stroke="#c040b0" stroke-width="2.5"/><circle cx="6" cy="10" r="3" fill="#f07aa0"/></svg>
<svg class="a" style="left:690px;top:494px" width="9" height="13" viewBox="0 0 9 13"><path d="M1 1 L1 11 L3.5 8.5 L5.5 12 L7 11.3 L5 8 L8 8 Z" fill="#fff" stroke="#333" stroke-width=".9"/></svg>

<!-- Taskbar -->
<div id="task" class="a">
</div>
<div class="a" style="left:46px;top:682px;width:320px;height:37px;background:#fff;border-bottom:1px solid #c8d0d2"></div>
<div class="a" style="left:15px;top:693px;width:7px;height:7px;background:#000"></div>
<div class="a" style="left:23px;top:693px;width:7px;height:7px;background:#000"></div>
<div class="a" style="left:15px;top:701px;width:7px;height:7px;background:#000"></div>
<div class="a" style="left:23px;top:701px;width:7px;height:7px;background:#000"></div>
<svg class="a" style="left:55px;top:693px" width="18" height="16" viewBox="0 0 18 16"><circle cx="11" cy="6" r="5" fill="none" stroke="#222" stroke-width="1.4"/><line x1="7.5" y1="9.5" x2="2" y2="15" stroke="#222" stroke-width="1.6"/></svg>
<div class="t" style="left:82px;top:693px;font-size:13.6px;color:#333">Введите здесь текст для поиска</div>
<div class="a" style="left:383px;top:693px;width:14px;height:14px;border-radius:50%;border:2px solid #111"></div>
<svg class="a" style="left:426px;top:692px" width="16" height="16" viewBox="0 0 16 16"><rect x="2" y="3" width="10" height="10" fill="none" stroke="#222" stroke-width="1.5"/><line x1="0" y1="3" x2="14" y2="3" stroke="#222" stroke-width="1.5"/><line x1="0" y1="13" x2="14" y2="13" stroke="#222" stroke-width="1.5"/><line x1="15" y1="1" x2="15" y2="15" stroke="#222" stroke-width="1.5" stroke-dasharray="3 2"/></svg>
<svg class="a" style="left:471px;top:690px" width="24" height="20" viewBox="0 0 24 20"><path d="M0 7 L12 0 L24 7 L24 20 L0 20 Z" fill="#1a7fd4"/><path d="M0 7 L12 14 L24 7 L24 20 L0 20Z" fill="#36a3ee"/><path d="M3 7 L12 2 L21 7 L12 12 Z" fill="#fff"/></svg>
<svg class="a" style="left:517px;top:691px" width="22" height="18" viewBox="0 0 22 18"><path d="M0 0 H8 L10 3 H22 V18 H0 Z" fill="#e8b21e"/><rect x="0" y="5" width="22" height="13" fill="#f7ce4a"/><rect x="7" y="10" width="9" height="8" fill="#3a86c8"/><rect x="9" y="13" width="5" height="5" fill="#f7ce4a"/></svg>
<svg class="a" style="left:566px;top:690px" width="18" height="21" viewBox="0 0 18 21"><path d="M0 4 L12 0 L18 2 L18 19 L12 21 L0 17 L12 18 L12 3 L5 5 L5 15 L0 17 Z" fill="#e03a16"/></svg>
<div class="a" style="left:609px;top:690px;width:21px;height:21px;border-radius:50%;background:#f4f4f4;box-shadow:0 1px 1px #bbb"></div>
<div class="t" style="left:613px;top:692px;font-size:14px;font-weight:bold;color:#e8221a">Y</div>
<svg class="a" style="left:654px;top:689px" width="24" height="24" viewBox="0 0 24 24"><defs><linearGradient id="eg" x1="0" y1="0" x2="1" y2="1"><stop offset="0" stop-color="#37c8a8"/><stop offset=".5" stop-color="#1a9ee6"/><stop offset="1" stop-color="#0c5ab0"/></linearGradient></defs><circle cx="12" cy="12" r="11" fill="url(#eg)"/><path d="M7 14 C7 8 17 8 17 12 C17 15 12 15 11 13 C10 17 15 20 20 17" fill="none" stroke="#d4ebed" stroke-width="3"/></svg>
<div class="a" style="left:693px;top:717px;width:38px;height:2px;background:#1570c8"></div>
<div class="a" style="left:700px;top:690px;width:24px;height:21px;background:#1a6cc8"></div>
<div class="a" style="left:706px;top:695px;width:12px;height:12px;border-radius:50%;border:2.5px solid #fff"></div>
<div class="a" style="left:736px;top:682px;width:44px;height:37px;background:#e6f3f4"></div>
<div class="a" style="left:736px;top:717px;width:44px;height:2px;background:#1570c8"></div>
<div class="a" style="left:748px;top:690px;width:20px;height:20px;border-radius:6px;background:#3d8ce8"></div>
<div class="a" style="left:752px;top:697px;width:8px;height:6px;border-radius:1px;background:#fff"></div>
<div class="a" style="left:760px;top:698px;width:0;height:0;border-top:2px solid transparent;border-bottom:2px solid transparent;border-right:4px solid #fff"></div>
<!-- tray -->
<svg class="a" style="left:911px;top:692px" width="20" height="18" viewBox="0 0 20 18"><path d="M4 10 C1 10 1 5 5 5 C6 1 13 1 14 5 C18 5 18 10 15 10 Z" fill="#b8d4ec"/><circle cx="6" cy="14" r="1.3" fill="#6aa8dc"/><circle cx="11" cy="16" r="1.3" fill="#6aa8dc"/><circle cx="15" cy="13" r="1.3" fill="#6aa8dc"/></svg>
<div class="t" style="left:939px;top:692px;font-size:13px;color:#222">21°C</div>
<svg class="a" style="left:982px;top:695px" width="14" height="9" viewBox="0 0 14 9"><path d="M1 8 L7 2 L13 8" fill="none" stroke="#222" stroke-width="1.5"/></svg>
<svg class="a" style="left:1003px;top:694px" width="17" height="12" viewBox="0 0 17 12"><path d="M4 11 C0 11 0 6 4 6 C5 1 12 1 13 5 C17 5 17 11 13 11 Z" fill="#c8cccc" stroke="#555" stroke-width="1.2"/></svg>
<svg class="a" style="left:1028px;top:692px" width="13" height="17" viewBox="0 0 13 17"><path d="M2 1 Q6 -1 10 1 M2 16 Q6 18 10 16" fill="none" stroke="#333" stroke-width="1"/><rect x="1" y="5" width="7" height="7" fill="none" stroke="#222" stroke-width="1.3"/><path d="M8 7 L12 5 L12 12 L8 10" fill="none" stroke="#222" stroke-width="1.2"/></svg>
<svg class="a" style="left:1051px;top:691px" width="11" height="19" viewBox="0 0 11 19"><rect x="3" y="0" width="5" height="12" rx="2.5" fill="#111"/><path d="M1 9 Q1 14 5.5 14 Q10 14 10 9" fill="none" stroke="#111" stroke-width="1.3"/><line x1="5.5" y1="14" x2="5.5" y2="18" stroke="#111" stroke-width="1.3"/><line x1="2" y1="18" x2="9" y2="18" stroke="#111" stroke-width="1.3"/></svg>
<svg class="a" style="left:1070px;top:693px" width="17" height="14" viewBox="0 0 17 14"><rect x="5" y="4" width="11" height="8" fill="none" stroke="#222" stroke-width="1.3"/><rect x="6" y="7" width="5" height="4" fill="#222"/><path d="M1 2 L1 7 L4 9 L4 13 M4 2 L4 5" fill="none" stroke="#222" stroke-width="1.3"/></svg>
<svg class="a" style="left:1095px;top:693px" width="14" height="14" viewBox="0 0 14 14"><path d="M1 13 A12 12 0 0 1 13 1 M4 13 A9 9 0 0 1 13 4 M7 13 A6 6 0 0 1 13 7" fill="none" stroke="#444" stroke-width="1.2"/><circle cx="11.5" cy="11.5" r="1.8" fill="#111"/></svg>
<svg class="a" style="left:1115px;top:692px" width="16" height="16" viewBox="0 0 16 16"><path d="M1 5 H4 L8 1 V15 L4 11 H1 Z" fill="none" stroke="#222" stroke-width="1.2"/><path d="M10 5 Q12 8 10 11 M12 3 Q15 8 12 13" fill="none" stroke="#222" stroke-width="1.2"/></svg>
<div class="t" style="left:1141px;top:694px;font-size:10.2px;color:#222">РУС</div>
<div class="t" style="left:1186px;top:686px;font-size:10.2px;color:#222">16:23</div>
<div class="t" style="left:1174px;top:703px;font-size:10px;color:#222">20.05.2021</div>
<svg class="a" style="left:1240px;top:692px" width="18" height="16" viewBox="0 0 18 16"><path d="M1 1 H17 V11 H6 L2 15 V11 H1 Z" fill="#111"/><line x1="4" y1="4" x2="14" y2="4" stroke="#d4ebed" stroke-width="1"/><line x1="4" y1="7" x2="14" y2="7" stroke="#d4ebed" stroke-width="1"/></svg>
<div class="a" style="left:1249px;top:699px;width:15px;height:15px;border-radius:50%;background:#dfe6e7;border:1px solid #9aa;color:#222;font-size:10px;line-height:13px;text-align:center">3</div>


</body></html>
